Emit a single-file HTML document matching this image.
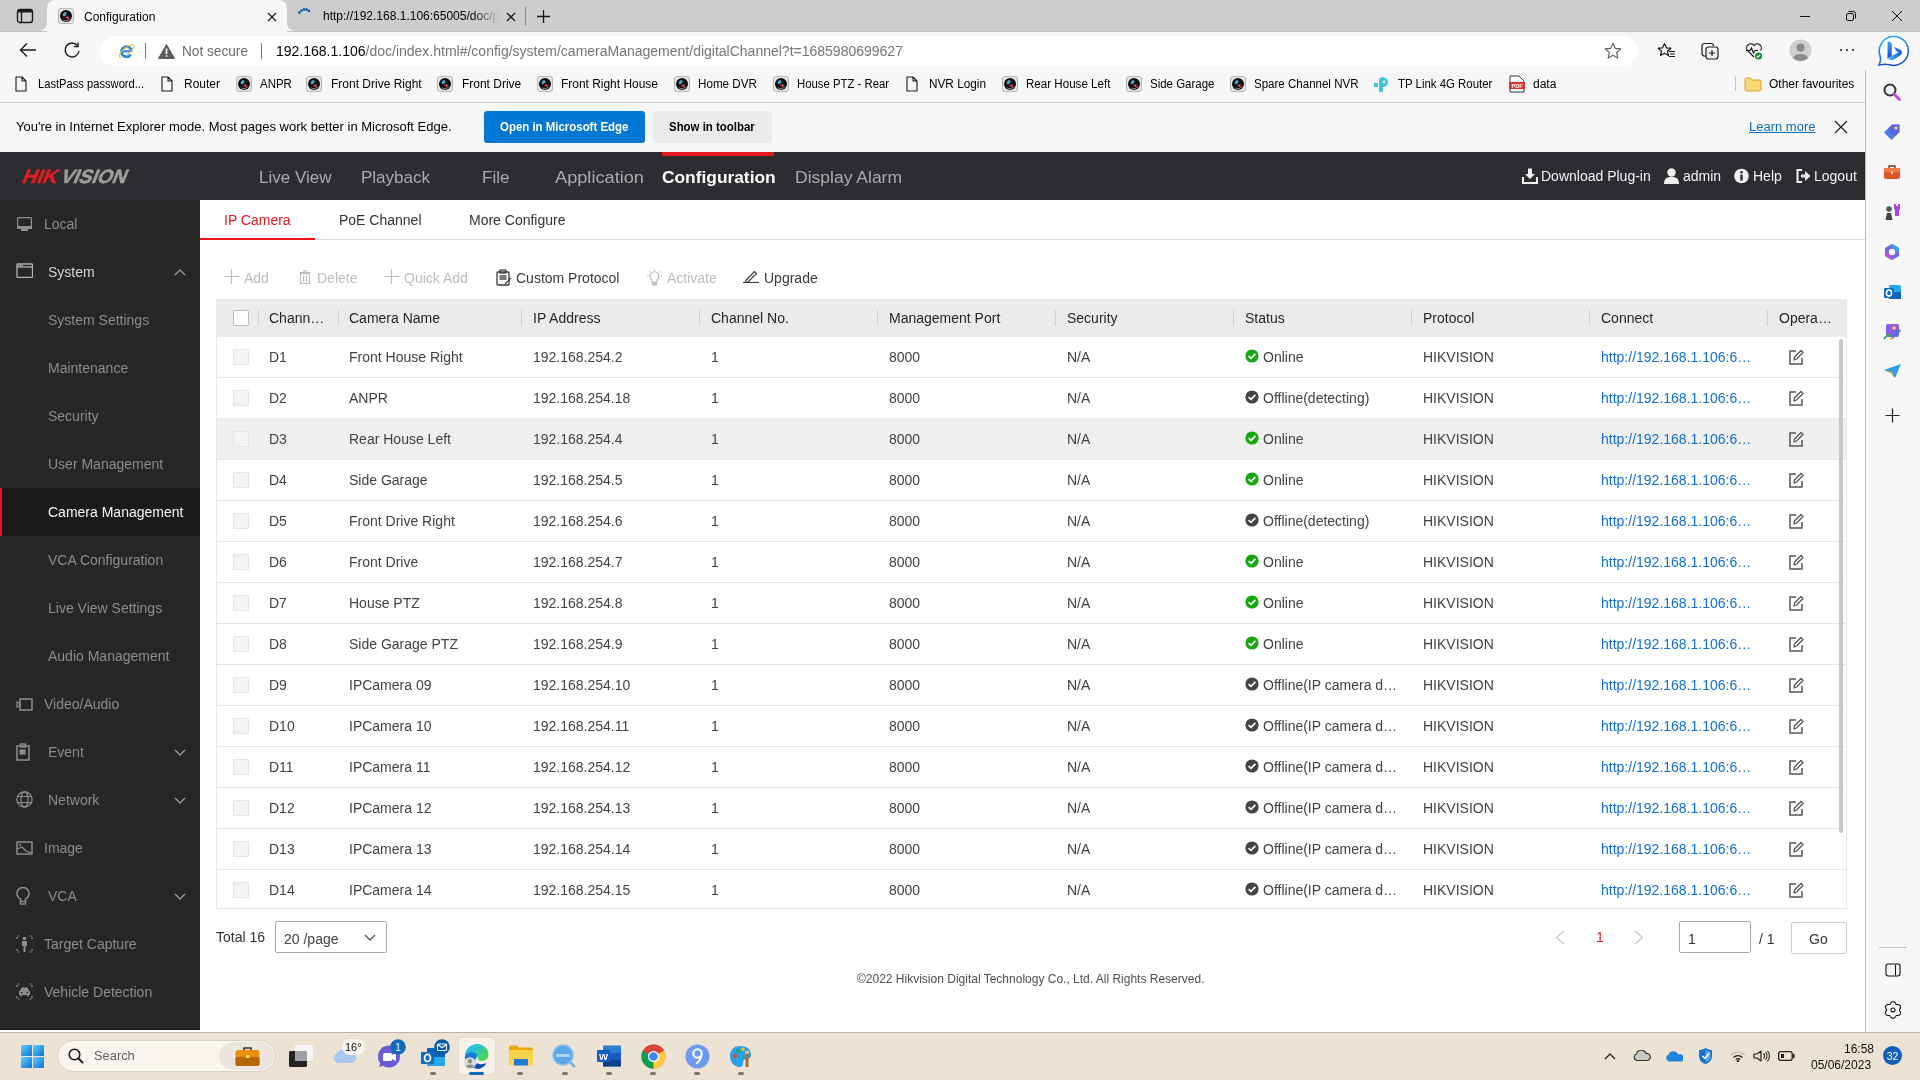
<!DOCTYPE html>
<html><head><meta charset="utf-8"><title>Configuration</title>
<style>
*{box-sizing:border-box;margin:0;padding:0}
html,body{width:1920px;height:1080px;overflow:hidden;background:#fff;font-family:"Liberation Sans",sans-serif;line-height:normal}
body{will-change:transform}
.a{position:absolute;white-space:nowrap}
</style></head><body>
<div class="a" style="left:0px;top:0px;width:1920px;height:31px;background:#cdcdcd"></div>
<div class="a" style="left:0px;top:31px;width:1920px;height:39px;background:#f7f7f7"></div>
<div class="a" style="left:0px;top:31px;width:47px;height:1px;background:#c2c2c2"></div>
<div class="a" style="left:287px;top:31px;width:1633px;height:1px;background:#c2c2c2"></div>
<div class="a" style="left:0px;top:70px;width:1865px;height:33px;background:#f7f7f7"></div>
<div class="a" style="left:0px;top:102px;width:1865px;height:1px;background:#d2d2d2"></div>
<div class="a" style="left:0px;top:103px;width:1865px;height:49px;background:#f7f7f7"></div>
<div class="a" style="left:1865px;top:70px;width:55px;height:962px;background:#f7f7f7"></div>
<div class="a" style="left:1865px;top:70px;width:1px;height:962px;background:#bdbdbd"></div>
<div class="a" style="left:0px;top:152px;width:1865px;height:48px;background:#2c2d31"></div>
<div class="a" style="left:0px;top:200px;width:200px;height:830px;background:#262626"></div>
<div class="a" style="left:0px;top:1029px;width:200px;height:1px;background:#151515"></div>
<div class="a" style="left:200px;top:200px;width:1665px;height:832px;background:#fff"></div>
<div class="a" style="left:0px;top:1032px;width:1920px;height:48px;background:#ece3d4"></div>
<div class="a" style="left:0px;top:1032px;width:1920px;height:1px;background:#bbb3a8"></div>
<svg class="a" style="left:16px;top:8px;" width="20" height="16" viewBox="0 0 20 16"><rect x="1.5" y="1.5" width="15" height="13" rx="2.5" fill="none" stroke="#1a1a1a" stroke-width="1.4"/><rect x="1.5" y="1.5" width="15" height="3" rx="1" fill="#1a1a1a"/><line x1="5.5" y1="2" x2="5.5" y2="14" stroke="#1a1a1a" stroke-width="1.4"/></svg>
<div class="a" style="left:47px;top:0;width:240px;height:31px;background:#f7f7f7;border-radius:8px 8px 0 0"></div>
<svg class="a" style="left:39px;top:23px" width="8" height="8"><path d="M8 0 V8 H0 A8 8 0 0 0 8 0Z" fill="#f7f7f7"/></svg>
<svg class="a" style="left:287px;top:23px" width="8" height="8"><path d="M0 0 V8 H8 A8 8 0 0 1 0 0Z" fill="#f7f7f7"/></svg>
<svg class="a" style="left:58px;top:8px;" width="16" height="16" viewBox="0 0 16 16"><rect x="0.5" y="0.5" width="15" height="15" rx="2.5" fill="#e6e6e6" stroke="#a8a8a8" stroke-width="0.8"/><circle cx="8" cy="8" r="6" fill="#0e0e0e"/><path d="M11.8 10.5 A4.6 4.6 0 0 1 5 11.8" fill="none" stroke="#cfcfcf" stroke-width="0.7"/><ellipse cx="6.6" cy="6.2" rx="1.6" ry="2.3" transform="rotate(40 6.6 6.2)" fill="#4aa8d8"/><ellipse cx="9.2" cy="9.6" rx="2.1" ry="1.7" fill="#8c1820"/><ellipse cx="9.4" cy="9.4" rx="0.9" ry="0.6" fill="#f08a8a"/></svg>
<div class="a" style="left:84px;top:10px;font-size:12px;color:#000;">Configuration</div>
<svg class="a" style="left:267px;top:12px;" width="10" height="10" viewBox="0 0 10 10"><path d="M1 1L9 9M9 1L1 9" stroke="#1a1a1a" stroke-width="1.3"/></svg>
<svg class="a" style="left:296px;top:6px;" width="16" height="10" viewBox="0 0 16 10"><circle cx="3.5" cy="6.6" r="1.35" fill="#0a5fb2"/><circle cx="5.5" cy="4.5" r="1.35" fill="#0a5fb2"/><circle cx="8.1" cy="3.4" r="1.35" fill="#0a5fb2"/><circle cx="10.6" cy="3.6" r="1.35" fill="#0a5fb2"/><circle cx="13.0" cy="4.9" r="1.35" fill="#0a5fb2"/></svg>
<div class="a" style="left:323px;top:9px;font-size:12px;color:#000;width:176px;overflow:hidden;-webkit-mask-image:linear-gradient(90deg,#000 85%,transparent)">http://192.168.1.106:65005/doc/page</div>
<svg class="a" style="left:506px;top:12px;" width="10" height="10" viewBox="0 0 10 10"><path d="M1 1L9 9M9 1L1 9" stroke="#1a1a1a" stroke-width="1.3"/></svg>
<div class="a" style="left:525px;top:7px;width:1px;height:19px;background:#8a8a8a"></div>
<svg class="a" style="left:536px;top:10px;" width="15" height="13" viewBox="0 0 15 13"><path d="M7.5 0V13M1 6.5H14" stroke="#1a1a1a" stroke-width="1.3"/></svg>
<div class="a" style="left:1800px;top:16px;width:10px;height:1px;background:#111"></div>
<svg class="a" style="left:1845px;top:10px;" width="12" height="12" viewBox="0 0 12 12"><rect x="1.5" y="3.5" width="7" height="7" rx="1.5" fill="none" stroke="#111" stroke-width="1"/><path d="M3.5 1.5 H8.5 A2 2 0 0 1 10.5 3.5 V8.5" fill="none" stroke="#111" stroke-width="1"/></svg>
<svg class="a" style="left:1891px;top:10px;" width="12" height="12" viewBox="0 0 12 12"><path d="M1 1L11 11M11 1L1 11" stroke="#111" stroke-width="1"/></svg>
<svg class="a" style="left:19px;top:42px;" width="18" height="16" viewBox="0 0 18 16"><path d="M17 8H2M8 1.5L1.5 8L8 14.5" fill="none" stroke="#1a1a1a" stroke-width="1.4"/></svg>
<svg class="a" style="left:63px;top:42px;" width="18" height="17" viewBox="0 0 18 17"><path d="M14.5 3.5 A7 7 0 1 0 16 9" fill="none" stroke="#1a1a1a" stroke-width="1.4"/><path d="M15 0.5V4.5H11" fill="none" stroke="#1a1a1a" stroke-width="1.4"/></svg>
<div class="a" style="left:100px;top:36px;width:1538px;height:30px;background:#fff;border-radius:15px"></div>
<svg class="a" style="left:117px;top:42px;" width="19" height="18" viewBox="0 0 19 18"><path d="M14.6 9.3 A5.1 5.1 0 1 0 13.7 12.6" fill="none" stroke="#2a8ce0" stroke-width="2.8"/><path d="M5 9.3 H14.8" stroke="#2a8ce0" stroke-width="2.2"/><ellipse cx="9.5" cy="9" rx="9" ry="3.2" fill="none" stroke="#f2b632" stroke-width="1.1" transform="rotate(-40 9.5 9)" stroke-dasharray="12 6 40"/></svg>
<div class="a" style="left:145px;top:43px;width:1px;height:16px;background:#777"></div>
<svg class="a" style="left:158px;top:44px;" width="17" height="15" viewBox="0 0 17 15"><path d="M8.5 0.5 L16.5 14.5 H0.5Z" fill="#5c5c5c" stroke="#5c5c5c" stroke-linejoin="round" stroke-width="1"/><rect x="7.7" y="4.5" width="1.6" height="5.5" fill="#fff"/><rect x="7.7" y="11.2" width="1.6" height="1.6" fill="#fff"/></svg>
<div class="a" style="left:182px;top:43px;font-size:14px;color:#6b6b6b;transform:scaleX(0.975);transform-origin:0 0;">Not secure</div>
<div class="a" style="left:261px;top:43px;width:1px;height:16px;background:#777"></div>
<div class="a" style="left:276px;top:43px;font-size:14px;color:#767676"><span style="color:#000">192.168.1.106</span>/doc/index.html#/config/system/cameraManagement/digitalChannel?t=1685980699627</div>
<svg class="a" style="left:1604px;top:42px;" width="18" height="18" viewBox="0 0 18 18"><path d="M9 1.2 L11.3 6.4 L16.8 6.9 L12.6 10.6 L13.9 16.1 L9 13.2 L4.1 16.1 L5.4 10.6 L1.2 6.9 L6.7 6.4Z" fill="none" stroke="#5a5a5a" stroke-width="1.1" stroke-linejoin="round"/></svg>
<svg class="a" style="left:1657px;top:42px;" width="19" height="18" viewBox="0 0 19 18"><path d="M7.5 1.5 L9.4 5.8 L13.8 6.2 L10.4 9.2 L11.5 13.6 L7.5 11.3 L3.5 13.6 L4.6 9.2 L1.2 6.2 L5.6 5.8Z" fill="none" stroke="#1a1a1a" stroke-width="1.2" stroke-linejoin="round"/><path d="M12 9.5H18M13 12H18M12 14.5H18" stroke="#1a1a1a" stroke-width="1.2"/></svg>
<svg class="a" style="left:1701px;top:42px;" width="19" height="18" viewBox="0 0 19 18"><path d="M5 14 H3.5 A2.5 2.5 0 0 1 1 11.5 V4 A2.5 2.5 0 0 1 3.5 1.5 H10 A2.5 2.5 0 0 1 12.5 4" fill="none" stroke="#1a1a1a" stroke-width="1.2"/><rect x="5" y="5" width="12" height="12" rx="2.5" fill="none" stroke="#1a1a1a" stroke-width="1.2"/><path d="M11 8V14M8 11H14" stroke="#1a1a1a" stroke-width="1.2"/></svg>
<svg class="a" style="left:1745px;top:42px;" width="19" height="19" viewBox="0 0 19 19"><path d="M9 15 L2.5 8.5 A4 4 0 0 1 9 3.5 A4 4 0 0 1 15.5 8.5" fill="none" stroke="#1a1a1a" stroke-width="1.2"/><path d="M1 8.5H5L6.5 6L8.5 11L10 8.5H13" fill="none" stroke="#1a1a1a" stroke-width="1.2"/><circle cx="13.5" cy="14" r="3.6" fill="#1e8a3a"/><path d="M11.8 14L13 15.2L15.2 12.8" fill="none" stroke="#fff" stroke-width="1.1"/></svg>
<svg class="a" style="left:1789px;top:39px;" width="23" height="23" viewBox="0 0 23 23"><circle cx="11.5" cy="11.5" r="11" fill="#cfcfcf"/><circle cx="11.5" cy="8.5" r="4" fill="#8a8a8a"/><path d="M4 19 A8 6 0 0 1 19 19 A11 11 0 0 1 4 19Z" fill="#8a8a8a"/></svg>
<div class="a" style="left:1840px;top:49px;width:2.4px;height:2.4px;background:#1a1a1a;border-radius:50%"></div>
<div class="a" style="left:1846px;top:49px;width:2.4px;height:2.4px;background:#1a1a1a;border-radius:50%"></div>
<div class="a" style="left:1852px;top:49px;width:2.4px;height:2.4px;background:#1a1a1a;border-radius:50%"></div>
<svg class="a" style="left:1877px;top:35px;" width="32" height="32" viewBox="0 0 32 32"><defs><linearGradient id="bb" x1="0" y1="0" x2="0.3" y2="1"><stop offset="0" stop-color="#18b4ee"/><stop offset="1" stop-color="#1a4fd8"/></linearGradient><linearGradient id="bs" x1="0" y1="0" x2="0" y2="1"><stop offset="0" stop-color="#37a6ff"/><stop offset="1" stop-color="#1840d8"/></linearGradient><linearGradient id="bw" x1="0" y1="0" x2="1" y2="0"><stop offset="0" stop-color="#50d0f8"/><stop offset="1" stop-color="#1a50e0"/></linearGradient></defs><path d="M2 30 C3.5 27 4 24 3 20.5 A14.5 14.5 0 1 1 12.5 29.8 C8.5 28.5 5 29.5 2 30 Z" fill="#fff" stroke="url(#bb)" stroke-width="1.5"/><path d="M10.5 8.5 C10.5 6.5 11.5 6 13 7 L14.8 8.3 V23 L10.5 24Z" fill="url(#bs)"/><path d="M17.5 12 L23 14.5 C25.2 15.8 25.6 18.6 23.8 20 L17.5 24.3 C15 26 12 25.2 10.5 23 L21.5 17.2 L18.8 16 Z" fill="url(#bw)"/></svg>
<svg class="a" style="left:15px;top:76px;" width="12" height="16" viewBox="0 0 12 16"><path d="M1 1 H7 L11 5 V15 H1Z M7 1 V5 H11" fill="none" stroke="#1a1a1a" stroke-width="1.1" stroke-linejoin="round"/></svg>
<div class="a" style="left:38px;top:77px;font-size:12px;color:#000;transform:scaleX(0.93);transform-origin:0 0;">LastPass password...</div>
<svg class="a" style="left:161px;top:76px;" width="12" height="16" viewBox="0 0 12 16"><path d="M1 1 H7 L11 5 V15 H1Z M7 1 V5 H11" fill="none" stroke="#1a1a1a" stroke-width="1.1" stroke-linejoin="round"/></svg>
<div class="a" style="left:184px;top:77px;font-size:12px;color:#000;transform:scaleX(0.997);transform-origin:0 0;">Router</div>
<svg class="a" style="left:236px;top:76px;" width="16" height="16" viewBox="0 0 16 16"><rect x="0.5" y="0.5" width="15" height="15" rx="2.5" fill="#e6e6e6" stroke="#a8a8a8" stroke-width="0.8"/><circle cx="8" cy="8" r="6" fill="#0e0e0e"/><path d="M11.8 10.5 A4.6 4.6 0 0 1 5 11.8" fill="none" stroke="#cfcfcf" stroke-width="0.7"/><ellipse cx="6.6" cy="6.2" rx="1.6" ry="2.3" transform="rotate(40 6.6 6.2)" fill="#4aa8d8"/><ellipse cx="9.2" cy="9.6" rx="2.1" ry="1.7" fill="#8c1820"/><ellipse cx="9.4" cy="9.4" rx="0.9" ry="0.6" fill="#f08a8a"/></svg>
<div class="a" style="left:260px;top:77px;font-size:12px;color:#000;transform:scaleX(0.956);transform-origin:0 0;">ANPR</div>
<svg class="a" style="left:306px;top:76px;" width="16" height="16" viewBox="0 0 16 16"><rect x="0.5" y="0.5" width="15" height="15" rx="2.5" fill="#e6e6e6" stroke="#a8a8a8" stroke-width="0.8"/><circle cx="8" cy="8" r="6" fill="#0e0e0e"/><path d="M11.8 10.5 A4.6 4.6 0 0 1 5 11.8" fill="none" stroke="#cfcfcf" stroke-width="0.7"/><ellipse cx="6.6" cy="6.2" rx="1.6" ry="2.3" transform="rotate(40 6.6 6.2)" fill="#4aa8d8"/><ellipse cx="9.2" cy="9.6" rx="2.1" ry="1.7" fill="#8c1820"/><ellipse cx="9.4" cy="9.4" rx="0.9" ry="0.6" fill="#f08a8a"/></svg>
<div class="a" style="left:331px;top:77px;font-size:12px;color:#000;transform:scaleX(1.0);transform-origin:0 0;">Front Drive Right</div>
<svg class="a" style="left:437px;top:76px;" width="16" height="16" viewBox="0 0 16 16"><rect x="0.5" y="0.5" width="15" height="15" rx="2.5" fill="#e6e6e6" stroke="#a8a8a8" stroke-width="0.8"/><circle cx="8" cy="8" r="6" fill="#0e0e0e"/><path d="M11.8 10.5 A4.6 4.6 0 0 1 5 11.8" fill="none" stroke="#cfcfcf" stroke-width="0.7"/><ellipse cx="6.6" cy="6.2" rx="1.6" ry="2.3" transform="rotate(40 6.6 6.2)" fill="#4aa8d8"/><ellipse cx="9.2" cy="9.6" rx="2.1" ry="1.7" fill="#8c1820"/><ellipse cx="9.4" cy="9.4" rx="0.9" ry="0.6" fill="#f08a8a"/></svg>
<div class="a" style="left:462px;top:77px;font-size:12px;color:#000;transform:scaleX(0.998);transform-origin:0 0;">Front Drive</div>
<svg class="a" style="left:537px;top:76px;" width="16" height="16" viewBox="0 0 16 16"><rect x="0.5" y="0.5" width="15" height="15" rx="2.5" fill="#e6e6e6" stroke="#a8a8a8" stroke-width="0.8"/><circle cx="8" cy="8" r="6" fill="#0e0e0e"/><path d="M11.8 10.5 A4.6 4.6 0 0 1 5 11.8" fill="none" stroke="#cfcfcf" stroke-width="0.7"/><ellipse cx="6.6" cy="6.2" rx="1.6" ry="2.3" transform="rotate(40 6.6 6.2)" fill="#4aa8d8"/><ellipse cx="9.2" cy="9.6" rx="2.1" ry="1.7" fill="#8c1820"/><ellipse cx="9.4" cy="9.4" rx="0.9" ry="0.6" fill="#f08a8a"/></svg>
<div class="a" style="left:561px;top:77px;font-size:12px;color:#000;transform:scaleX(0.995);transform-origin:0 0;">Front Right House</div>
<svg class="a" style="left:674px;top:76px;" width="16" height="16" viewBox="0 0 16 16"><rect x="0.5" y="0.5" width="15" height="15" rx="2.5" fill="#e6e6e6" stroke="#a8a8a8" stroke-width="0.8"/><circle cx="8" cy="8" r="6" fill="#0e0e0e"/><path d="M11.8 10.5 A4.6 4.6 0 0 1 5 11.8" fill="none" stroke="#cfcfcf" stroke-width="0.7"/><ellipse cx="6.6" cy="6.2" rx="1.6" ry="2.3" transform="rotate(40 6.6 6.2)" fill="#4aa8d8"/><ellipse cx="9.2" cy="9.6" rx="2.1" ry="1.7" fill="#8c1820"/><ellipse cx="9.4" cy="9.4" rx="0.9" ry="0.6" fill="#f08a8a"/></svg>
<div class="a" style="left:698px;top:77px;font-size:12px;color:#000;transform:scaleX(0.97);transform-origin:0 0;">Home DVR</div>
<svg class="a" style="left:773px;top:76px;" width="16" height="16" viewBox="0 0 16 16"><rect x="0.5" y="0.5" width="15" height="15" rx="2.5" fill="#e6e6e6" stroke="#a8a8a8" stroke-width="0.8"/><circle cx="8" cy="8" r="6" fill="#0e0e0e"/><path d="M11.8 10.5 A4.6 4.6 0 0 1 5 11.8" fill="none" stroke="#cfcfcf" stroke-width="0.7"/><ellipse cx="6.6" cy="6.2" rx="1.6" ry="2.3" transform="rotate(40 6.6 6.2)" fill="#4aa8d8"/><ellipse cx="9.2" cy="9.6" rx="2.1" ry="1.7" fill="#8c1820"/><ellipse cx="9.4" cy="9.4" rx="0.9" ry="0.6" fill="#f08a8a"/></svg>
<div class="a" style="left:797px;top:77px;font-size:12px;color:#000;transform:scaleX(0.946);transform-origin:0 0;">House PTZ - Rear</div>
<svg class="a" style="left:906px;top:76px;" width="12" height="16" viewBox="0 0 12 16"><path d="M1 1 H7 L11 5 V15 H1Z M7 1 V5 H11" fill="none" stroke="#1a1a1a" stroke-width="1.1" stroke-linejoin="round"/></svg>
<div class="a" style="left:929px;top:77px;font-size:12px;color:#000;transform:scaleX(0.981);transform-origin:0 0;">NVR Login</div>
<svg class="a" style="left:1002px;top:76px;" width="16" height="16" viewBox="0 0 16 16"><rect x="0.5" y="0.5" width="15" height="15" rx="2.5" fill="#e6e6e6" stroke="#a8a8a8" stroke-width="0.8"/><circle cx="8" cy="8" r="6" fill="#0e0e0e"/><path d="M11.8 10.5 A4.6 4.6 0 0 1 5 11.8" fill="none" stroke="#cfcfcf" stroke-width="0.7"/><ellipse cx="6.6" cy="6.2" rx="1.6" ry="2.3" transform="rotate(40 6.6 6.2)" fill="#4aa8d8"/><ellipse cx="9.2" cy="9.6" rx="2.1" ry="1.7" fill="#8c1820"/><ellipse cx="9.4" cy="9.4" rx="0.9" ry="0.6" fill="#f08a8a"/></svg>
<div class="a" style="left:1026px;top:77px;font-size:12px;color:#000;transform:scaleX(0.966);transform-origin:0 0;">Rear House Left</div>
<svg class="a" style="left:1126px;top:76px;" width="16" height="16" viewBox="0 0 16 16"><rect x="0.5" y="0.5" width="15" height="15" rx="2.5" fill="#e6e6e6" stroke="#a8a8a8" stroke-width="0.8"/><circle cx="8" cy="8" r="6" fill="#0e0e0e"/><path d="M11.8 10.5 A4.6 4.6 0 0 1 5 11.8" fill="none" stroke="#cfcfcf" stroke-width="0.7"/><ellipse cx="6.6" cy="6.2" rx="1.6" ry="2.3" transform="rotate(40 6.6 6.2)" fill="#4aa8d8"/><ellipse cx="9.2" cy="9.6" rx="2.1" ry="1.7" fill="#8c1820"/><ellipse cx="9.4" cy="9.4" rx="0.9" ry="0.6" fill="#f08a8a"/></svg>
<div class="a" style="left:1150px;top:77px;font-size:12px;color:#000;transform:scaleX(0.956);transform-origin:0 0;">Side Garage</div>
<svg class="a" style="left:1230px;top:76px;" width="16" height="16" viewBox="0 0 16 16"><rect x="0.5" y="0.5" width="15" height="15" rx="2.5" fill="#e6e6e6" stroke="#a8a8a8" stroke-width="0.8"/><circle cx="8" cy="8" r="6" fill="#0e0e0e"/><path d="M11.8 10.5 A4.6 4.6 0 0 1 5 11.8" fill="none" stroke="#cfcfcf" stroke-width="0.7"/><ellipse cx="6.6" cy="6.2" rx="1.6" ry="2.3" transform="rotate(40 6.6 6.2)" fill="#4aa8d8"/><ellipse cx="9.2" cy="9.6" rx="2.1" ry="1.7" fill="#8c1820"/><ellipse cx="9.4" cy="9.4" rx="0.9" ry="0.6" fill="#f08a8a"/></svg>
<div class="a" style="left:1254px;top:77px;font-size:12px;color:#000;transform:scaleX(0.961);transform-origin:0 0;">Spare Channel NVR</div>
<svg class="a" style="left:1373px;top:75px;" width="18" height="18" viewBox="0 0 18 18"><path d="M6 4 A5 5 0 1 1 11 12 H9 V8 H11 A1.2 1.2 0 1 0 9.8 6.8 V17 H6Z" fill="#3cc6d8"/><path d="M1 8 H5 V12 H1Z" fill="#3cc6d8"/></svg>
<div class="a" style="left:1398px;top:77px;font-size:12px;color:#000;transform:scaleX(0.952);transform-origin:0 0;">TP Link 4G Router</div>
<svg class="a" style="left:1509px;top:75px;" width="16" height="18" viewBox="0 0 16 18"><path d="M1 1 H10 L15 6 V17 H1Z" fill="#fff" stroke="#333" stroke-width="1"/><rect x="0" y="7" width="16" height="7" fill="#e03030"/><text x="8" y="12.6" font-size="5.5" font-family="Liberation Sans" font-weight="bold" fill="#fff" text-anchor="middle">PDF</text></svg>
<div class="a" style="left:1533px;top:77px;font-size:12px;color:#000;transform:scaleX(1.0);transform-origin:0 0;">data</div>
<div class="a" style="left:1735px;top:76px;width:1px;height:15px;background:#c8c8c8"></div>
<svg class="a" style="left:1744px;top:77px;" width="18" height="15" viewBox="0 0 18 15"><path d="M1 2.5 A1.5 1.5 0 0 1 2.5 1 H6.5 L8.5 3 H15.5 A1.5 1.5 0 0 1 17 4.5 V12.5 A1.5 1.5 0 0 1 15.5 14 H2.5 A1.5 1.5 0 0 1 1 12.5Z" fill="#f8d775" stroke="#c9a227" stroke-width="0.9"/></svg>
<div class="a" style="left:1769px;top:77px;font-size:12px;color:#000;">Other favourites</div>
<div class="a" style="left:16px;top:119px;font-size:13px;color:#000;">You're in Internet Explorer mode. Most pages work better in Microsoft Edge.</div>
<div class="a" style="left:484px;top:111px;width:161px;height:32px;background:#0078d4;border-radius:3px"></div>
<div class="a" style="left:500px;top:119px;font-size:13px;color:#fff;transform:scaleX(0.88);transform-origin:0 0;font-weight:bold;">Open in Microsoft Edge</div>
<div class="a" style="left:653px;top:111px;width:119px;height:32px;background:#ebebeb;border-radius:3px"></div>
<div class="a" style="left:669px;top:119px;font-size:13px;color:#000;transform:scaleX(0.88);transform-origin:0 0;font-weight:bold;">Show in toolbar</div>
<div class="a" style="left:1749px;top:119px;font-size:13px;color:#0f6cbd;text-decoration:underline">Learn more</div>
<svg class="a" style="left:1834px;top:120px;" width="14" height="14" viewBox="0 0 14 14"><path d="M1 1L13 13M13 1L1 13" stroke="#1a1a1a" stroke-width="1.2"/></svg>
<svg class="a" style="left:15px;top:160px;" width="125" height="30" viewBox="0 0 125 30"><g transform="translate(0,23) skewX(-22)"><text x="6" y="0" font-family="Liberation Sans" font-weight="bold" font-size="19.2" fill="#e31b23" stroke="#e31b23" stroke-width="0.5" textLength="35" lengthAdjust="spacingAndGlyphs">HIK</text><text x="44.5" y="0" font-family="Liberation Sans" font-weight="bold" font-size="19.2" fill="#9e9e9e" stroke="#9e9e9e" stroke-width="0.5" textLength="65.5" lengthAdjust="spacingAndGlyphs">VISION</text></g></svg>
<div class="a" style="left:662px;top:152px;width:112px;height:4px;background:#e8161f"></div>
<div class="a" style="left:259px;top:168px;font-size:17px;color:#aaabae;transform:scaleX(1.0);transform-origin:0 0;">Live View</div>
<div class="a" style="left:361px;top:168px;font-size:17px;color:#aaabae;transform:scaleX(1.0);transform-origin:0 0;">Playback</div>
<div class="a" style="left:482px;top:168px;font-size:17px;color:#aaabae;transform:scaleX(1.0);transform-origin:0 0;">File</div>
<div class="a" style="left:555px;top:168px;font-size:17px;color:#aaabae;transform:scaleX(1.07);transform-origin:0 0;">Application</div>
<div class="a" style="left:795px;top:168px;font-size:17px;color:#aaabae;transform:scaleX(1.03);transform-origin:0 0;">Display Alarm</div>
<div class="a" style="left:662px;top:168px;font-size:17px;color:#ffffff;transform:scaleX(1.02);transform-origin:0 0;font-weight:bold;">Configuration</div>
<svg class="a" style="left:1522px;top:168px;" width="16" height="16" viewBox="0 0 16 16"><path d="M6 0.5 H10 V6 H13 L8 11 L3 6 H6Z" fill="#f0f0f0"/><path d="M1 9 V15 H15 V9" fill="none" stroke="#f0f0f0" stroke-width="2"/></svg>
<div class="a" style="left:1541px;top:168px;font-size:14px;color:#f2f2f2;">Download Plug-in</div>
<svg class="a" style="left:1664px;top:168px;" width="15" height="16" viewBox="0 0 15 16"><circle cx="7.5" cy="4.5" r="4.2" fill="#f0f0f0"/><path d="M0 16 C0 10 3 9 7.5 9 C12 9 15 10 15 16Z" fill="#f0f0f0"/></svg>
<div class="a" style="left:1683px;top:168px;font-size:14px;color:#f2f2f2;">admin</div>
<svg class="a" style="left:1734px;top:168px;" width="15" height="16" viewBox="0 0 15 16"><circle cx="7.5" cy="8" r="7.3" fill="#f0f0f0"/><circle cx="7.5" cy="4.3" r="1.3" fill="#2c2d31"/><rect x="6.3" y="6.5" width="2.4" height="6" fill="#2c2d31"/></svg>
<div class="a" style="left:1753px;top:168px;font-size:14px;color:#f2f2f2;">Help</div>
<svg class="a" style="left:1796px;top:168px;" width="15" height="16" viewBox="0 0 15 16"><path d="M6 2 H1.5 V14 H6" fill="none" stroke="#f0f0f0" stroke-width="2"/><path d="M5 6.5 H9 V3 L14.5 8 L9 13 V9.5 H5Z" fill="#f0f0f0"/></svg>
<div class="a" style="left:1814px;top:168px;font-size:14px;color:#f2f2f2;">Logout</div>
<div class="a" style="left:0px;top:488px;width:200px;height:48px;background:#1a1a1a"></div>
<div class="a" style="left:0px;top:488px;width:2px;height:48px;background:#e8161f"></div>
<svg class="a" style="left:16px;top:216px;" width="17" height="17" viewBox="0 0 17 17"><rect x="1.6" y="1.6" width="13.8" height="10.8" rx="0.8" fill="none" stroke="#8f8f8f" stroke-width="1.2"/><rect x="1" y="10" width="15" height="3" fill="#8f8f8f"/><rect x="5" y="13" width="7" height="2" fill="#8f8f8f"/></svg>
<div class="a" style="left:44px;top:216px;font-size:14px;color:#8c8c8c;">Local</div>
<svg class="a" style="left:16px;top:263px;" width="17" height="15" viewBox="0 0 17 15"><rect x="1" y="1" width="15.5" height="13.5" rx="0.8" fill="none" stroke="#b4b4b4" stroke-width="1.3"/><rect x="1" y="3.3" width="15.5" height="1.3" fill="#b4b4b4"/><rect x="2.3" y="2" width="1" height="1.5" fill="#b4b4b4"/><rect x="4" y="2" width="1" height="1.5" fill="#b4b4b4"/><rect x="5.7" y="2" width="1" height="1.5" fill="#b4b4b4"/></svg>
<div class="a" style="left:48px;top:264px;font-size:14px;color:#d2d2d2;">System</div>
<svg class="a" style="left:174px;top:269px;" width="12" height="7" viewBox="0 0 12 7"><path d="M1 6 L6 1 L11 6" fill="none" stroke="#9a9a9a" stroke-width="1.3"/></svg>
<div class="a" style="left:48px;top:312px;font-size:14px;color:#8c8c8c;">System Settings</div>
<div class="a" style="left:48px;top:360px;font-size:14px;color:#8c8c8c;">Maintenance</div>
<div class="a" style="left:48px;top:408px;font-size:14px;color:#8c8c8c;">Security</div>
<div class="a" style="left:48px;top:456px;font-size:14px;color:#8c8c8c;">User Management</div>
<div class="a" style="left:48px;top:504px;font-size:14px;color:#f5f5f5;">Camera Management</div>
<div class="a" style="left:48px;top:552px;font-size:14px;color:#8c8c8c;">VCA Configuration</div>
<div class="a" style="left:48px;top:600px;font-size:14px;color:#8c8c8c;">Live View Settings</div>
<div class="a" style="left:48px;top:648px;font-size:14px;color:#8c8c8c;">Audio Management</div>
<svg class="a" style="left:16px;top:698px;" width="17" height="13" viewBox="0 0 17 13"><rect x="4" y="1" width="12" height="11" fill="none" stroke="#8f8f8f" stroke-width="1.5"/><path d="M1 4 L4 5.5 V7.5 L1 9Z" fill="none" stroke="#8f8f8f" stroke-width="1.2"/></svg>
<div class="a" style="left:44px;top:696px;font-size:14px;color:#8c8c8c;">Video/Audio</div>
<svg class="a" style="left:16px;top:743px;" width="14" height="18" viewBox="0 0 14 18"><rect x="1" y="3" width="12" height="14" fill="none" stroke="#8f8f8f" stroke-width="1.5"/><rect x="4.5" y="1" width="5" height="3" fill="none" stroke="#8f8f8f" stroke-width="1.3"/><rect x="3.5" y="6.5" width="6" height="5" fill="#8f8f8f"/></svg>
<div class="a" style="left:48px;top:744px;font-size:14px;color:#8c8c8c;">Event</div>
<svg class="a" style="left:174px;top:749px;" width="12" height="7" viewBox="0 0 12 7"><path d="M1 1 L6 6 L11 1" fill="none" stroke="#9a9a9a" stroke-width="1.3"/></svg>
<svg class="a" style="left:16px;top:791px;" width="17" height="17" viewBox="0 0 17 17"><circle cx="8.5" cy="8.5" r="7.6" fill="none" stroke="#8f8f8f" stroke-width="1.3"/><ellipse cx="8.5" cy="8.5" rx="3.6" ry="7.6" fill="none" stroke="#8f8f8f" stroke-width="1.2"/><path d="M1.2 5.5 H15.8 M1.2 11.5 H15.8" stroke="#8f8f8f" stroke-width="1.2"/></svg>
<div class="a" style="left:48px;top:792px;font-size:14px;color:#8c8c8c;">Network</div>
<svg class="a" style="left:174px;top:797px;" width="12" height="7" viewBox="0 0 12 7"><path d="M1 1 L6 6 L11 1" fill="none" stroke="#9a9a9a" stroke-width="1.3"/></svg>
<svg class="a" style="left:16px;top:841px;" width="17" height="14" viewBox="0 0 17 14"><rect x="1" y="1" width="15" height="12" fill="none" stroke="#8f8f8f" stroke-width="1.5"/><path d="M1.5 8 L6 6 L10 10 L15.5 12" fill="none" stroke="#8f8f8f" stroke-width="1.3"/><circle cx="4" cy="4" r="1" fill="#8f8f8f"/></svg>
<div class="a" style="left:44px;top:840px;font-size:14px;color:#8c8c8c;">Image</div>
<svg class="a" style="left:16px;top:887px;" width="14" height="18" viewBox="0 0 14 18"><path d="M4.5 15 V12 A6 6 0 1 1 9.5 12 V15" fill="none" stroke="#8f8f8f" stroke-width="1.5"/><rect x="4.5" y="14.5" width="5" height="2.5" fill="none" stroke="#8f8f8f" stroke-width="1.3"/></svg>
<div class="a" style="left:48px;top:888px;font-size:14px;color:#8c8c8c;">VCA</div>
<svg class="a" style="left:174px;top:893px;" width="12" height="7" viewBox="0 0 12 7"><path d="M1 1 L6 6 L11 1" fill="none" stroke="#9a9a9a" stroke-width="1.3"/></svg>
<svg class="a" style="left:16px;top:935px;" width="17" height="18" viewBox="0 0 17 18"><path d="M1 4 V1 H3.5 M13.5 1 H16 V4 M16 14 V17 H13.5 M3.5 17 H1 V14" fill="none" stroke="#8f8f8f" stroke-width="1.2" stroke-dasharray="2 1.5"/><circle cx="8.5" cy="3.5" r="1.8" fill="#8f8f8f"/><path d="M6 6 H11 V11 H9.5 V17 H7.5 V11 H6Z" fill="#8f8f8f"/></svg>
<div class="a" style="left:44px;top:936px;font-size:14px;color:#8c8c8c;">Target Capture</div>
<svg class="a" style="left:16px;top:983px;" width="17" height="17" viewBox="0 0 17 17"><path d="M1 4 V1 H3.5 M13.5 1 H16 V4 M16 13 V16 H13.5 M3.5 16 H1 V13" fill="none" stroke="#8f8f8f" stroke-width="1.2" stroke-dasharray="2 1.5"/><path d="M4 8 L5.5 4.5 H11.5 L13 8 H14 V12 H12.5 V13.5 H11 V12 H6 V13.5 H4.5 V12 H3 V8Z" fill="#8f8f8f"/><rect x="5" y="9" width="1.5" height="1.5" fill="#262626"/><rect x="10.5" y="9" width="1.5" height="1.5" fill="#262626"/></svg>
<div class="a" style="left:44px;top:984px;font-size:14px;color:#8c8c8c;">Vehicle Detection</div>
<div class="a" style="left:200px;top:239px;width:1665px;height:1px;background:#dcdcdc"></div>
<div class="a" style="left:200px;top:238px;width:115px;height:2px;background:#f0141e"></div>
<div class="a" style="left:224px;top:212px;font-size:14px;color:#e8161f;">IP Camera</div>
<div class="a" style="left:339px;top:212px;font-size:14px;color:#333;">PoE Channel</div>
<div class="a" style="left:469px;top:212px;font-size:14px;color:#333;">More Configure</div>
<svg class="a" style="left:224px;top:269px;" width="15" height="15" viewBox="0 0 15 15"><path d="M7.5 0V15M0 7.5H15" stroke="#bdbdbd" stroke-width="1.2"/></svg>
<div class="a" style="left:244px;top:270px;font-size:14px;color:#bdbdbd;">Add</div>
<svg class="a" style="left:299px;top:270px;" width="12" height="14" viewBox="0 0 12 14"><path d="M0.5 2.5H11.5M4 0.8H8" stroke="#bdbdbd" stroke-width="1.2"/><rect x="1.5" y="3.5" width="9" height="10" fill="none" stroke="#bdbdbd" stroke-width="1.2"/><path d="M4.5 5.5V11.5M7.5 5.5V11.5" stroke="#bdbdbd" stroke-width="1.2"/></svg>
<div class="a" style="left:317px;top:270px;font-size:14px;color:#bdbdbd;">Delete</div>
<svg class="a" style="left:384px;top:269px;" width="15" height="15" viewBox="0 0 15 15"><path d="M7.5 0V15M0 7.5H15" stroke="#bdbdbd" stroke-width="1.2"/></svg>
<div class="a" style="left:404px;top:270px;font-size:14px;color:#bdbdbd;">Quick Add</div>
<svg class="a" style="left:496px;top:269px;" width="16" height="17" viewBox="0 0 16 17"><rect x="1" y="3" width="12" height="13" rx="1" fill="none" stroke="#3a3a3a" stroke-width="1.3"/><rect x="4" y="1" width="6" height="3" fill="none" stroke="#3a3a3a" stroke-width="1.2"/><rect x="3.5" y="6" width="7" height="5" fill="#777"/><path d="M9 15 L15 9" stroke="#3a3a3a" stroke-width="1.2"/></svg>
<div class="a" style="left:516px;top:270px;font-size:14px;color:#3a3a3a;">Custom Protocol</div>
<svg class="a" style="left:646px;top:269px;" width="17" height="17" viewBox="0 0 17 17"><path d="M6 13 V11 A4.5 4.5 0 1 1 11 11 V13Z" fill="none" stroke="#bdbdbd" stroke-width="1.2"/><rect x="6" y="13.5" width="5" height="3" fill="#bdbdbd"/><path d="M8.5 0.5V2M1 6.5H2.5M14.5 6.5H16M3 2L4 3M14 2L13 3" stroke="#bdbdbd" stroke-width="1"/></svg>
<div class="a" style="left:667px;top:270px;font-size:14px;color:#bdbdbd;">Activate</div>
<svg class="a" style="left:743px;top:270px;" width="16" height="13" viewBox="0 0 16 13"><path d="M3 10 L11.5 1.5 L13.5 3.5 L5 12 L2.5 12.5Z" fill="none" stroke="#3a3a3a" stroke-width="1.2"/><path d="M0 12.5H16" stroke="#3a3a3a" stroke-width="1.2"/></svg>
<div class="a" style="left:764px;top:270px;font-size:14px;color:#3a3a3a;">Upgrade</div>
<div class="a" style="left:216px;top:299px;width:1631px;height:38px;background:#ebebeb"></div>
<div class="a" style="left:233px;top:310px;width:16px;height:16px;background:#fff;border:1px solid #bdbdbd;border-radius:2px"></div>
<div class="a" style="left:258px;top:310px;width:1px;height:16px;background:#d0d0d0"></div>
<div class="a" style="left:269px;top:310px;font-size:14px;color:#262626;">Chann&#8230;</div>
<div class="a" style="left:338px;top:310px;width:1px;height:16px;background:#d0d0d0"></div>
<div class="a" style="left:349px;top:310px;font-size:14px;color:#262626;">Camera Name</div>
<div class="a" style="left:521px;top:310px;width:1px;height:16px;background:#d0d0d0"></div>
<div class="a" style="left:533px;top:310px;font-size:14px;color:#262626;">IP Address</div>
<div class="a" style="left:699px;top:310px;width:1px;height:16px;background:#d0d0d0"></div>
<div class="a" style="left:711px;top:310px;font-size:14px;color:#262626;">Channel No.</div>
<div class="a" style="left:877px;top:310px;width:1px;height:16px;background:#d0d0d0"></div>
<div class="a" style="left:889px;top:310px;font-size:14px;color:#262626;">Management Port</div>
<div class="a" style="left:1055px;top:310px;width:1px;height:16px;background:#d0d0d0"></div>
<div class="a" style="left:1067px;top:310px;font-size:14px;color:#262626;">Security</div>
<div class="a" style="left:1233px;top:310px;width:1px;height:16px;background:#d0d0d0"></div>
<div class="a" style="left:1245px;top:310px;font-size:14px;color:#262626;">Status</div>
<div class="a" style="left:1411px;top:310px;width:1px;height:16px;background:#d0d0d0"></div>
<div class="a" style="left:1423px;top:310px;font-size:14px;color:#262626;">Protocol</div>
<div class="a" style="left:1589px;top:310px;width:1px;height:16px;background:#d0d0d0"></div>
<div class="a" style="left:1601px;top:310px;font-size:14px;color:#262626;">Connect</div>
<div class="a" style="left:1767px;top:310px;width:1px;height:16px;background:#d0d0d0"></div>
<div class="a" style="left:1779px;top:310px;font-size:14px;color:#262626;">Opera&#8230;</div>
<div class="a" style="left:216px;top:337px;width:1px;height:572px;background:#e8e8e8"></div>
<div class="a" style="left:1846px;top:337px;width:1px;height:572px;background:#e8e8e8"></div>
<div class="a" style="left:216px;top:908px;width:1631px;height:1px;background:#e8e8e8"></div>
<div class="a" style="left:217px;top:377px;width:1629px;height:1px;background:#e8e8e8"></div>
<div class="a" style="left:233px;top:349px;width:16px;height:16px;background:#f4f4f4;border:1px solid #e6e6e6;border-radius:1px"></div>
<div class="a" style="left:269px;top:349px;font-size:14px;color:#424242;">D1</div>
<div class="a" style="left:349px;top:349px;font-size:14px;color:#424242;">Front House Right</div>
<div class="a" style="left:533px;top:349px;font-size:14px;color:#424242;">192.168.254.2</div>
<div class="a" style="left:711px;top:349px;font-size:14px;color:#424242;">1</div>
<div class="a" style="left:889px;top:349px;font-size:14px;color:#424242;">8000</div>
<div class="a" style="left:1067px;top:349px;font-size:14px;color:#424242;">N/A</div>
<svg class="a" style="left:1245px;top:349px;" width="14" height="14" viewBox="0 0 14 14"><circle cx="7" cy="7" r="6.6" fill="#16a80f"/><path d="M3.6 7.2 L6 9.4 L10.4 4.8" fill="none" stroke="#fff" stroke-width="1.7"/></svg>
<div class="a" style="left:1263px;top:349px;font-size:14px;color:#424242;">Online</div>
<div class="a" style="left:1423px;top:349px;font-size:14px;color:#424242;">HIKVISION</div>
<div class="a" style="left:1601px;top:349px;font-size:14px;color:#106ed2;">http://192.168.1.106:6&#8230;</div>
<svg class="a" style="left:1788px;top:349px;" width="16" height="16" viewBox="0 0 16 16"><path d="M8 2 H2 V15 H14 V9" fill="none" stroke="#555" stroke-width="1.5"/><path d="M6 11 L6.5 8 L13 1.5 L15 3.5 L8.5 10Z" fill="none" stroke="#555" stroke-width="1.3" stroke-linejoin="round"/></svg>
<div class="a" style="left:217px;top:418px;width:1629px;height:1px;background:#e8e8e8"></div>
<div class="a" style="left:233px;top:390px;width:16px;height:16px;background:#f4f4f4;border:1px solid #e6e6e6;border-radius:1px"></div>
<div class="a" style="left:269px;top:390px;font-size:14px;color:#424242;">D2</div>
<div class="a" style="left:349px;top:390px;font-size:14px;color:#424242;">ANPR</div>
<div class="a" style="left:533px;top:390px;font-size:14px;color:#424242;">192.168.254.18</div>
<div class="a" style="left:711px;top:390px;font-size:14px;color:#424242;">1</div>
<div class="a" style="left:889px;top:390px;font-size:14px;color:#424242;">8000</div>
<div class="a" style="left:1067px;top:390px;font-size:14px;color:#424242;">N/A</div>
<svg class="a" style="left:1245px;top:390px;" width="14" height="14" viewBox="0 0 14 14"><circle cx="7" cy="7" r="6.6" fill="#444"/><path d="M3.6 7.2 L6 9.4 L10.4 4.8" fill="none" stroke="#fff" stroke-width="1.7"/></svg>
<div class="a" style="left:1263px;top:390px;font-size:14px;color:#424242;">Offline(detecting)</div>
<div class="a" style="left:1423px;top:390px;font-size:14px;color:#424242;">HIKVISION</div>
<div class="a" style="left:1601px;top:390px;font-size:14px;color:#106ed2;">http://192.168.1.106:6&#8230;</div>
<svg class="a" style="left:1788px;top:390px;" width="16" height="16" viewBox="0 0 16 16"><path d="M8 2 H2 V15 H14 V9" fill="none" stroke="#555" stroke-width="1.5"/><path d="M6 11 L6.5 8 L13 1.5 L15 3.5 L8.5 10Z" fill="none" stroke="#555" stroke-width="1.3" stroke-linejoin="round"/></svg>
<div class="a" style="left:217px;top:419px;width:1629px;height:40px;background:#f0f0f0"></div>
<div class="a" style="left:217px;top:459px;width:1629px;height:1px;background:#e8e8e8"></div>
<div class="a" style="left:233px;top:431px;width:16px;height:16px;background:#f4f4f4;border:1px solid #e6e6e6;border-radius:1px"></div>
<div class="a" style="left:269px;top:431px;font-size:14px;color:#424242;">D3</div>
<div class="a" style="left:349px;top:431px;font-size:14px;color:#424242;">Rear House Left</div>
<div class="a" style="left:533px;top:431px;font-size:14px;color:#424242;">192.168.254.4</div>
<div class="a" style="left:711px;top:431px;font-size:14px;color:#424242;">1</div>
<div class="a" style="left:889px;top:431px;font-size:14px;color:#424242;">8000</div>
<div class="a" style="left:1067px;top:431px;font-size:14px;color:#424242;">N/A</div>
<svg class="a" style="left:1245px;top:431px;" width="14" height="14" viewBox="0 0 14 14"><circle cx="7" cy="7" r="6.6" fill="#16a80f"/><path d="M3.6 7.2 L6 9.4 L10.4 4.8" fill="none" stroke="#fff" stroke-width="1.7"/></svg>
<div class="a" style="left:1263px;top:431px;font-size:14px;color:#424242;">Online</div>
<div class="a" style="left:1423px;top:431px;font-size:14px;color:#424242;">HIKVISION</div>
<div class="a" style="left:1601px;top:431px;font-size:14px;color:#106ed2;">http://192.168.1.106:6&#8230;</div>
<svg class="a" style="left:1788px;top:431px;" width="16" height="16" viewBox="0 0 16 16"><path d="M8 2 H2 V15 H14 V9" fill="none" stroke="#555" stroke-width="1.5"/><path d="M6 11 L6.5 8 L13 1.5 L15 3.5 L8.5 10Z" fill="none" stroke="#555" stroke-width="1.3" stroke-linejoin="round"/></svg>
<div class="a" style="left:217px;top:500px;width:1629px;height:1px;background:#e8e8e8"></div>
<div class="a" style="left:233px;top:472px;width:16px;height:16px;background:#f4f4f4;border:1px solid #e6e6e6;border-radius:1px"></div>
<div class="a" style="left:269px;top:472px;font-size:14px;color:#424242;">D4</div>
<div class="a" style="left:349px;top:472px;font-size:14px;color:#424242;">Side Garage</div>
<div class="a" style="left:533px;top:472px;font-size:14px;color:#424242;">192.168.254.5</div>
<div class="a" style="left:711px;top:472px;font-size:14px;color:#424242;">1</div>
<div class="a" style="left:889px;top:472px;font-size:14px;color:#424242;">8000</div>
<div class="a" style="left:1067px;top:472px;font-size:14px;color:#424242;">N/A</div>
<svg class="a" style="left:1245px;top:472px;" width="14" height="14" viewBox="0 0 14 14"><circle cx="7" cy="7" r="6.6" fill="#16a80f"/><path d="M3.6 7.2 L6 9.4 L10.4 4.8" fill="none" stroke="#fff" stroke-width="1.7"/></svg>
<div class="a" style="left:1263px;top:472px;font-size:14px;color:#424242;">Online</div>
<div class="a" style="left:1423px;top:472px;font-size:14px;color:#424242;">HIKVISION</div>
<div class="a" style="left:1601px;top:472px;font-size:14px;color:#106ed2;">http://192.168.1.106:6&#8230;</div>
<svg class="a" style="left:1788px;top:472px;" width="16" height="16" viewBox="0 0 16 16"><path d="M8 2 H2 V15 H14 V9" fill="none" stroke="#555" stroke-width="1.5"/><path d="M6 11 L6.5 8 L13 1.5 L15 3.5 L8.5 10Z" fill="none" stroke="#555" stroke-width="1.3" stroke-linejoin="round"/></svg>
<div class="a" style="left:217px;top:541px;width:1629px;height:1px;background:#e8e8e8"></div>
<div class="a" style="left:233px;top:513px;width:16px;height:16px;background:#f4f4f4;border:1px solid #e6e6e6;border-radius:1px"></div>
<div class="a" style="left:269px;top:513px;font-size:14px;color:#424242;">D5</div>
<div class="a" style="left:349px;top:513px;font-size:14px;color:#424242;">Front Drive Right</div>
<div class="a" style="left:533px;top:513px;font-size:14px;color:#424242;">192.168.254.6</div>
<div class="a" style="left:711px;top:513px;font-size:14px;color:#424242;">1</div>
<div class="a" style="left:889px;top:513px;font-size:14px;color:#424242;">8000</div>
<div class="a" style="left:1067px;top:513px;font-size:14px;color:#424242;">N/A</div>
<svg class="a" style="left:1245px;top:513px;" width="14" height="14" viewBox="0 0 14 14"><circle cx="7" cy="7" r="6.6" fill="#444"/><path d="M3.6 7.2 L6 9.4 L10.4 4.8" fill="none" stroke="#fff" stroke-width="1.7"/></svg>
<div class="a" style="left:1263px;top:513px;font-size:14px;color:#424242;">Offline(detecting)</div>
<div class="a" style="left:1423px;top:513px;font-size:14px;color:#424242;">HIKVISION</div>
<div class="a" style="left:1601px;top:513px;font-size:14px;color:#106ed2;">http://192.168.1.106:6&#8230;</div>
<svg class="a" style="left:1788px;top:513px;" width="16" height="16" viewBox="0 0 16 16"><path d="M8 2 H2 V15 H14 V9" fill="none" stroke="#555" stroke-width="1.5"/><path d="M6 11 L6.5 8 L13 1.5 L15 3.5 L8.5 10Z" fill="none" stroke="#555" stroke-width="1.3" stroke-linejoin="round"/></svg>
<div class="a" style="left:217px;top:582px;width:1629px;height:1px;background:#e8e8e8"></div>
<div class="a" style="left:233px;top:554px;width:16px;height:16px;background:#f4f4f4;border:1px solid #e6e6e6;border-radius:1px"></div>
<div class="a" style="left:269px;top:554px;font-size:14px;color:#424242;">D6</div>
<div class="a" style="left:349px;top:554px;font-size:14px;color:#424242;">Front Drive</div>
<div class="a" style="left:533px;top:554px;font-size:14px;color:#424242;">192.168.254.7</div>
<div class="a" style="left:711px;top:554px;font-size:14px;color:#424242;">1</div>
<div class="a" style="left:889px;top:554px;font-size:14px;color:#424242;">8000</div>
<div class="a" style="left:1067px;top:554px;font-size:14px;color:#424242;">N/A</div>
<svg class="a" style="left:1245px;top:554px;" width="14" height="14" viewBox="0 0 14 14"><circle cx="7" cy="7" r="6.6" fill="#16a80f"/><path d="M3.6 7.2 L6 9.4 L10.4 4.8" fill="none" stroke="#fff" stroke-width="1.7"/></svg>
<div class="a" style="left:1263px;top:554px;font-size:14px;color:#424242;">Online</div>
<div class="a" style="left:1423px;top:554px;font-size:14px;color:#424242;">HIKVISION</div>
<div class="a" style="left:1601px;top:554px;font-size:14px;color:#106ed2;">http://192.168.1.106:6&#8230;</div>
<svg class="a" style="left:1788px;top:554px;" width="16" height="16" viewBox="0 0 16 16"><path d="M8 2 H2 V15 H14 V9" fill="none" stroke="#555" stroke-width="1.5"/><path d="M6 11 L6.5 8 L13 1.5 L15 3.5 L8.5 10Z" fill="none" stroke="#555" stroke-width="1.3" stroke-linejoin="round"/></svg>
<div class="a" style="left:217px;top:623px;width:1629px;height:1px;background:#e8e8e8"></div>
<div class="a" style="left:233px;top:595px;width:16px;height:16px;background:#f4f4f4;border:1px solid #e6e6e6;border-radius:1px"></div>
<div class="a" style="left:269px;top:595px;font-size:14px;color:#424242;">D7</div>
<div class="a" style="left:349px;top:595px;font-size:14px;color:#424242;">House PTZ</div>
<div class="a" style="left:533px;top:595px;font-size:14px;color:#424242;">192.168.254.8</div>
<div class="a" style="left:711px;top:595px;font-size:14px;color:#424242;">1</div>
<div class="a" style="left:889px;top:595px;font-size:14px;color:#424242;">8000</div>
<div class="a" style="left:1067px;top:595px;font-size:14px;color:#424242;">N/A</div>
<svg class="a" style="left:1245px;top:595px;" width="14" height="14" viewBox="0 0 14 14"><circle cx="7" cy="7" r="6.6" fill="#16a80f"/><path d="M3.6 7.2 L6 9.4 L10.4 4.8" fill="none" stroke="#fff" stroke-width="1.7"/></svg>
<div class="a" style="left:1263px;top:595px;font-size:14px;color:#424242;">Online</div>
<div class="a" style="left:1423px;top:595px;font-size:14px;color:#424242;">HIKVISION</div>
<div class="a" style="left:1601px;top:595px;font-size:14px;color:#106ed2;">http://192.168.1.106:6&#8230;</div>
<svg class="a" style="left:1788px;top:595px;" width="16" height="16" viewBox="0 0 16 16"><path d="M8 2 H2 V15 H14 V9" fill="none" stroke="#555" stroke-width="1.5"/><path d="M6 11 L6.5 8 L13 1.5 L15 3.5 L8.5 10Z" fill="none" stroke="#555" stroke-width="1.3" stroke-linejoin="round"/></svg>
<div class="a" style="left:217px;top:664px;width:1629px;height:1px;background:#e8e8e8"></div>
<div class="a" style="left:233px;top:636px;width:16px;height:16px;background:#f4f4f4;border:1px solid #e6e6e6;border-radius:1px"></div>
<div class="a" style="left:269px;top:636px;font-size:14px;color:#424242;">D8</div>
<div class="a" style="left:349px;top:636px;font-size:14px;color:#424242;">Side Garage PTZ</div>
<div class="a" style="left:533px;top:636px;font-size:14px;color:#424242;">192.168.254.9</div>
<div class="a" style="left:711px;top:636px;font-size:14px;color:#424242;">1</div>
<div class="a" style="left:889px;top:636px;font-size:14px;color:#424242;">8000</div>
<div class="a" style="left:1067px;top:636px;font-size:14px;color:#424242;">N/A</div>
<svg class="a" style="left:1245px;top:636px;" width="14" height="14" viewBox="0 0 14 14"><circle cx="7" cy="7" r="6.6" fill="#16a80f"/><path d="M3.6 7.2 L6 9.4 L10.4 4.8" fill="none" stroke="#fff" stroke-width="1.7"/></svg>
<div class="a" style="left:1263px;top:636px;font-size:14px;color:#424242;">Online</div>
<div class="a" style="left:1423px;top:636px;font-size:14px;color:#424242;">HIKVISION</div>
<div class="a" style="left:1601px;top:636px;font-size:14px;color:#106ed2;">http://192.168.1.106:6&#8230;</div>
<svg class="a" style="left:1788px;top:636px;" width="16" height="16" viewBox="0 0 16 16"><path d="M8 2 H2 V15 H14 V9" fill="none" stroke="#555" stroke-width="1.5"/><path d="M6 11 L6.5 8 L13 1.5 L15 3.5 L8.5 10Z" fill="none" stroke="#555" stroke-width="1.3" stroke-linejoin="round"/></svg>
<div class="a" style="left:217px;top:705px;width:1629px;height:1px;background:#e8e8e8"></div>
<div class="a" style="left:233px;top:677px;width:16px;height:16px;background:#f4f4f4;border:1px solid #e6e6e6;border-radius:1px"></div>
<div class="a" style="left:269px;top:677px;font-size:14px;color:#424242;">D9</div>
<div class="a" style="left:349px;top:677px;font-size:14px;color:#424242;">IPCamera 09</div>
<div class="a" style="left:533px;top:677px;font-size:14px;color:#424242;">192.168.254.10</div>
<div class="a" style="left:711px;top:677px;font-size:14px;color:#424242;">1</div>
<div class="a" style="left:889px;top:677px;font-size:14px;color:#424242;">8000</div>
<div class="a" style="left:1067px;top:677px;font-size:14px;color:#424242;">N/A</div>
<svg class="a" style="left:1245px;top:677px;" width="14" height="14" viewBox="0 0 14 14"><circle cx="7" cy="7" r="6.6" fill="#444"/><path d="M3.6 7.2 L6 9.4 L10.4 4.8" fill="none" stroke="#fff" stroke-width="1.7"/></svg>
<div class="a" style="left:1263px;top:677px;font-size:14px;color:#424242;">Offline(IP camera d&#8230;</div>
<div class="a" style="left:1423px;top:677px;font-size:14px;color:#424242;">HIKVISION</div>
<div class="a" style="left:1601px;top:677px;font-size:14px;color:#106ed2;">http://192.168.1.106:6&#8230;</div>
<svg class="a" style="left:1788px;top:677px;" width="16" height="16" viewBox="0 0 16 16"><path d="M8 2 H2 V15 H14 V9" fill="none" stroke="#555" stroke-width="1.5"/><path d="M6 11 L6.5 8 L13 1.5 L15 3.5 L8.5 10Z" fill="none" stroke="#555" stroke-width="1.3" stroke-linejoin="round"/></svg>
<div class="a" style="left:217px;top:746px;width:1629px;height:1px;background:#e8e8e8"></div>
<div class="a" style="left:233px;top:718px;width:16px;height:16px;background:#f4f4f4;border:1px solid #e6e6e6;border-radius:1px"></div>
<div class="a" style="left:269px;top:718px;font-size:14px;color:#424242;">D10</div>
<div class="a" style="left:349px;top:718px;font-size:14px;color:#424242;">IPCamera 10</div>
<div class="a" style="left:533px;top:718px;font-size:14px;color:#424242;">192.168.254.11</div>
<div class="a" style="left:711px;top:718px;font-size:14px;color:#424242;">1</div>
<div class="a" style="left:889px;top:718px;font-size:14px;color:#424242;">8000</div>
<div class="a" style="left:1067px;top:718px;font-size:14px;color:#424242;">N/A</div>
<svg class="a" style="left:1245px;top:718px;" width="14" height="14" viewBox="0 0 14 14"><circle cx="7" cy="7" r="6.6" fill="#444"/><path d="M3.6 7.2 L6 9.4 L10.4 4.8" fill="none" stroke="#fff" stroke-width="1.7"/></svg>
<div class="a" style="left:1263px;top:718px;font-size:14px;color:#424242;">Offline(IP camera d&#8230;</div>
<div class="a" style="left:1423px;top:718px;font-size:14px;color:#424242;">HIKVISION</div>
<div class="a" style="left:1601px;top:718px;font-size:14px;color:#106ed2;">http://192.168.1.106:6&#8230;</div>
<svg class="a" style="left:1788px;top:718px;" width="16" height="16" viewBox="0 0 16 16"><path d="M8 2 H2 V15 H14 V9" fill="none" stroke="#555" stroke-width="1.5"/><path d="M6 11 L6.5 8 L13 1.5 L15 3.5 L8.5 10Z" fill="none" stroke="#555" stroke-width="1.3" stroke-linejoin="round"/></svg>
<div class="a" style="left:217px;top:787px;width:1629px;height:1px;background:#e8e8e8"></div>
<div class="a" style="left:233px;top:759px;width:16px;height:16px;background:#f4f4f4;border:1px solid #e6e6e6;border-radius:1px"></div>
<div class="a" style="left:269px;top:759px;font-size:14px;color:#424242;">D11</div>
<div class="a" style="left:349px;top:759px;font-size:14px;color:#424242;">IPCamera 11</div>
<div class="a" style="left:533px;top:759px;font-size:14px;color:#424242;">192.168.254.12</div>
<div class="a" style="left:711px;top:759px;font-size:14px;color:#424242;">1</div>
<div class="a" style="left:889px;top:759px;font-size:14px;color:#424242;">8000</div>
<div class="a" style="left:1067px;top:759px;font-size:14px;color:#424242;">N/A</div>
<svg class="a" style="left:1245px;top:759px;" width="14" height="14" viewBox="0 0 14 14"><circle cx="7" cy="7" r="6.6" fill="#444"/><path d="M3.6 7.2 L6 9.4 L10.4 4.8" fill="none" stroke="#fff" stroke-width="1.7"/></svg>
<div class="a" style="left:1263px;top:759px;font-size:14px;color:#424242;">Offline(IP camera d&#8230;</div>
<div class="a" style="left:1423px;top:759px;font-size:14px;color:#424242;">HIKVISION</div>
<div class="a" style="left:1601px;top:759px;font-size:14px;color:#106ed2;">http://192.168.1.106:6&#8230;</div>
<svg class="a" style="left:1788px;top:759px;" width="16" height="16" viewBox="0 0 16 16"><path d="M8 2 H2 V15 H14 V9" fill="none" stroke="#555" stroke-width="1.5"/><path d="M6 11 L6.5 8 L13 1.5 L15 3.5 L8.5 10Z" fill="none" stroke="#555" stroke-width="1.3" stroke-linejoin="round"/></svg>
<div class="a" style="left:217px;top:828px;width:1629px;height:1px;background:#e8e8e8"></div>
<div class="a" style="left:233px;top:800px;width:16px;height:16px;background:#f4f4f4;border:1px solid #e6e6e6;border-radius:1px"></div>
<div class="a" style="left:269px;top:800px;font-size:14px;color:#424242;">D12</div>
<div class="a" style="left:349px;top:800px;font-size:14px;color:#424242;">IPCamera 12</div>
<div class="a" style="left:533px;top:800px;font-size:14px;color:#424242;">192.168.254.13</div>
<div class="a" style="left:711px;top:800px;font-size:14px;color:#424242;">1</div>
<div class="a" style="left:889px;top:800px;font-size:14px;color:#424242;">8000</div>
<div class="a" style="left:1067px;top:800px;font-size:14px;color:#424242;">N/A</div>
<svg class="a" style="left:1245px;top:800px;" width="14" height="14" viewBox="0 0 14 14"><circle cx="7" cy="7" r="6.6" fill="#444"/><path d="M3.6 7.2 L6 9.4 L10.4 4.8" fill="none" stroke="#fff" stroke-width="1.7"/></svg>
<div class="a" style="left:1263px;top:800px;font-size:14px;color:#424242;">Offline(IP camera d&#8230;</div>
<div class="a" style="left:1423px;top:800px;font-size:14px;color:#424242;">HIKVISION</div>
<div class="a" style="left:1601px;top:800px;font-size:14px;color:#106ed2;">http://192.168.1.106:6&#8230;</div>
<svg class="a" style="left:1788px;top:800px;" width="16" height="16" viewBox="0 0 16 16"><path d="M8 2 H2 V15 H14 V9" fill="none" stroke="#555" stroke-width="1.5"/><path d="M6 11 L6.5 8 L13 1.5 L15 3.5 L8.5 10Z" fill="none" stroke="#555" stroke-width="1.3" stroke-linejoin="round"/></svg>
<div class="a" style="left:217px;top:869px;width:1629px;height:1px;background:#e8e8e8"></div>
<div class="a" style="left:233px;top:841px;width:16px;height:16px;background:#f4f4f4;border:1px solid #e6e6e6;border-radius:1px"></div>
<div class="a" style="left:269px;top:841px;font-size:14px;color:#424242;">D13</div>
<div class="a" style="left:349px;top:841px;font-size:14px;color:#424242;">IPCamera 13</div>
<div class="a" style="left:533px;top:841px;font-size:14px;color:#424242;">192.168.254.14</div>
<div class="a" style="left:711px;top:841px;font-size:14px;color:#424242;">1</div>
<div class="a" style="left:889px;top:841px;font-size:14px;color:#424242;">8000</div>
<div class="a" style="left:1067px;top:841px;font-size:14px;color:#424242;">N/A</div>
<svg class="a" style="left:1245px;top:841px;" width="14" height="14" viewBox="0 0 14 14"><circle cx="7" cy="7" r="6.6" fill="#444"/><path d="M3.6 7.2 L6 9.4 L10.4 4.8" fill="none" stroke="#fff" stroke-width="1.7"/></svg>
<div class="a" style="left:1263px;top:841px;font-size:14px;color:#424242;">Offline(IP camera d&#8230;</div>
<div class="a" style="left:1423px;top:841px;font-size:14px;color:#424242;">HIKVISION</div>
<div class="a" style="left:1601px;top:841px;font-size:14px;color:#106ed2;">http://192.168.1.106:6&#8230;</div>
<svg class="a" style="left:1788px;top:841px;" width="16" height="16" viewBox="0 0 16 16"><path d="M8 2 H2 V15 H14 V9" fill="none" stroke="#555" stroke-width="1.5"/><path d="M6 11 L6.5 8 L13 1.5 L15 3.5 L8.5 10Z" fill="none" stroke="#555" stroke-width="1.3" stroke-linejoin="round"/></svg>
<div class="a" style="left:233px;top:882px;width:16px;height:16px;background:#f4f4f4;border:1px solid #e6e6e6;border-radius:1px"></div>
<div class="a" style="left:269px;top:882px;font-size:14px;color:#424242;">D14</div>
<div class="a" style="left:349px;top:882px;font-size:14px;color:#424242;">IPCamera 14</div>
<div class="a" style="left:533px;top:882px;font-size:14px;color:#424242;">192.168.254.15</div>
<div class="a" style="left:711px;top:882px;font-size:14px;color:#424242;">1</div>
<div class="a" style="left:889px;top:882px;font-size:14px;color:#424242;">8000</div>
<div class="a" style="left:1067px;top:882px;font-size:14px;color:#424242;">N/A</div>
<svg class="a" style="left:1245px;top:882px;" width="14" height="14" viewBox="0 0 14 14"><circle cx="7" cy="7" r="6.6" fill="#444"/><path d="M3.6 7.2 L6 9.4 L10.4 4.8" fill="none" stroke="#fff" stroke-width="1.7"/></svg>
<div class="a" style="left:1263px;top:882px;font-size:14px;color:#424242;">Offline(IP camera d&#8230;</div>
<div class="a" style="left:1423px;top:882px;font-size:14px;color:#424242;">HIKVISION</div>
<div class="a" style="left:1601px;top:882px;font-size:14px;color:#106ed2;">http://192.168.1.106:6&#8230;</div>
<svg class="a" style="left:1788px;top:882px;" width="16" height="16" viewBox="0 0 16 16"><path d="M8 2 H2 V15 H14 V9" fill="none" stroke="#555" stroke-width="1.5"/><path d="M6 11 L6.5 8 L13 1.5 L15 3.5 L8.5 10Z" fill="none" stroke="#555" stroke-width="1.3" stroke-linejoin="round"/></svg>
<div class="a" style="left:1839px;top:339px;width:4px;height:494px;background:#c8c8c8;border-radius:2px"></div>
<div class="a" style="left:216px;top:929px;font-size:14px;color:#333;">Total 16</div>
<div class="a" style="left:275px;top:921px;width:112px;height:32px;background:#fff;border:1px solid #a9a9a9;border-radius:2px"></div>
<div class="a" style="left:284px;top:931px;font-size:14px;color:#444;">20 /page</div>
<svg class="a" style="left:364px;top:934px;" width="12" height="7" viewBox="0 0 12 7"><path d="M1 1 L6 6 L11 1" fill="none" stroke="#555" stroke-width="1.3"/></svg>
<svg class="a" style="left:1555px;top:930px;" width="10" height="15" viewBox="0 0 10 15"><path d="M9 1 L1.5 7.5 L9 14" fill="none" stroke="#c4c4c4" stroke-width="1.2"/></svg>
<div class="a" style="left:1596px;top:929px;font-size:14px;color:#e8161f;">1</div>
<svg class="a" style="left:1634px;top:930px;" width="10" height="15" viewBox="0 0 10 15"><path d="M1 1 L8.5 7.5 L1 14" fill="none" stroke="#c4c4c4" stroke-width="1.2"/></svg>
<div class="a" style="left:1679px;top:921px;width:72px;height:32px;background:#fff;border:1px solid #a9a9a9;border-radius:2px"></div>
<div class="a" style="left:1688px;top:931px;font-size:14px;color:#333;">1</div>
<div class="a" style="left:1759px;top:931px;font-size:14px;color:#333;">/ 1</div>
<div class="a" style="left:1791px;top:922px;width:56px;height:32px;background:#fff;border:1px solid #cfcfcf;border-radius:2px"></div>
<div class="a" style="left:1809px;top:931px;font-size:14px;color:#333;">Go</div>
<div class="a" style="left:857px;top:972px;font-size:12px;color:#505050;">©2022 Hikvision Digital Technology Co., Ltd. All Rights Reserved.</div>
<svg class="a" style="left:1883px;top:83px;" width="18" height="18" viewBox="0 0 18 18"><circle cx="7" cy="7" r="5.5" fill="#e8f2fb" stroke="#333" stroke-width="2"/><path d="M11 11 L16.5 16.5" stroke="#c040e0" stroke-width="2.6" stroke-linecap="round"/></svg>
<svg class="a" style="left:1883px;top:123px;" width="18" height="18" viewBox="0 0 18 18"><path d="M9 1.5 H16.5 V9 L8.5 17 L1 9.5Z" fill="#4a7be8"/><path d="M9 1.5 H16.5 V9 L12 13.5 L5 6Z" fill="#6a5ae0" opacity="0.6"/><circle cx="13" cy="5" r="1.6" fill="#ffd24a"/></svg>
<svg class="a" style="left:1883px;top:164px;" width="18" height="16" viewBox="0 0 18 16"><rect x="1" y="4" width="16" height="11" rx="2" fill="#e2552a"/><rect x="1" y="4" width="16" height="4" fill="#f07a40"/><path d="M6 4 V2 H12 V4" fill="none" stroke="#7a3a20" stroke-width="1.4"/><rect x="8" y="7" width="2" height="3" fill="#f6d0a0"/></svg>
<svg class="a" style="left:1883px;top:203px;" width="19" height="18" viewBox="0 0 19 18"><circle cx="6" cy="6" r="2.8" fill="#555"/><path d="M2.5 17 L4 10 H8 L9.5 17Z" fill="#444"/><path d="M11 1 H13 V3 H15 V1 H17 V6 L16 7 V13 H12 V7 L11 6Z" fill="#b040e0"/></svg>
<svg class="a" style="left:1883px;top:243px;" width="18" height="18" viewBox="0 0 18 18"><path d="M9 1 L16 5 V13 L9 17 L2 13 V5Z" fill="#6a6ae8"/><path d="M9 1 L16 5 V9 L9 5Z" fill="#3aa0f0"/><path d="M2 13 L9 17 L9 13 L2 9Z" fill="#c050d0"/><circle cx="9" cy="9" r="3.2" fill="#f7f7f7"/></svg>
<svg class="a" style="left:1883px;top:283px;" width="19" height="18" viewBox="0 0 19 18"><rect x="6" y="2" width="12" height="14" rx="1.5" fill="#28a8ea"/><rect x="6" y="9" width="12" height="7" fill="#0a64b8"/><rect x="1" y="5" width="10" height="10" rx="1.2" fill="#0f6cbd"/><ellipse cx="6" cy="10" rx="2.6" ry="3" fill="none" stroke="#fff" stroke-width="1.5"/></svg>
<svg class="a" style="left:1883px;top:323px;" width="19" height="18" viewBox="0 0 19 18"><rect x="3" y="1" width="13" height="13" rx="2" fill="#8e5ce8"/><circle cx="11" cy="5" r="1.8" fill="#ffd24a"/><path d="M1 16 C4 11 7 12 10 14" fill="none" stroke="#2aa860" stroke-width="2"/><path d="M9 15 L17 7" stroke="#3a78e0" stroke-width="2.4"/><path d="M7.5 16.5 L9.5 14.5" stroke="#f0b020" stroke-width="2"/></svg>
<svg class="a" style="left:1883px;top:363px;" width="19" height="16" viewBox="0 0 19 16"><path d="M1 7 L18 1 L12 15 L8 10Z" fill="#2a9ff0"/><path d="M1 7 L8 10 L12 15 L9 9Z" fill="#f0a020"/><path d="M8 10 L18 1 L9 9Z" fill="#1a6fd0"/></svg>
<svg class="a" style="left:1885px;top:408px;" width="15" height="15" viewBox="0 0 15 15"><path d="M7.5 0.5V14.5M0.5 7.5H14.5" stroke="#222" stroke-width="1.2"/></svg>
<div class="a" style="left:1879px;top:947px;width:28px;height:1px;background:#c4c4c4"></div>
<svg class="a" style="left:1885px;top:963px;" width="16" height="14" viewBox="0 0 16 14"><rect x="1" y="1" width="14" height="12" rx="2.2" fill="none" stroke="#111" stroke-width="1.1"/><path d="M10.5 1.5 V12.5" stroke="#111" stroke-width="1.1"/></svg>
<svg class="a" style="left:1884px;top:1001px;" width="18" height="18" viewBox="0 0 18 18"><path d="M9.00 0.70 L9.14 0.70 L9.29 0.72 L9.43 0.74 L9.58 0.77 L9.72 0.81 L9.86 0.86 L9.99 0.92 L10.13 0.98 L10.26 1.06 L10.39 1.14 L10.51 1.23 L10.63 1.32 L10.75 1.42 L10.86 1.53 L10.97 1.64 L11.08 1.76 L11.18 1.88 L11.27 2.00 L11.37 2.13 L11.45 2.26 L11.54 2.39 L11.61 2.53 L11.69 2.66 L11.76 2.80 L11.83 2.93 L11.89 3.06 L11.96 3.19 L12.02 3.32 L12.08 3.44 L12.15 3.54 L12.27 3.55 L12.41 3.54 L12.55 3.54 L12.69 3.53 L12.84 3.52 L12.99 3.51 L13.14 3.50 L13.30 3.50 L13.45 3.50 L13.61 3.51 L13.77 3.52 L13.92 3.53 L14.08 3.55 L14.23 3.58 L14.39 3.61 L14.54 3.65 L14.69 3.70 L14.83 3.75 L14.98 3.80 L15.12 3.87 L15.25 3.94 L15.38 4.02 L15.50 4.10 L15.62 4.19 L15.73 4.29 L15.84 4.39 L15.94 4.50 L16.03 4.61 L16.11 4.73 L16.19 4.85 L16.26 4.98 L16.32 5.11 L16.37 5.25 L16.41 5.38 L16.45 5.53 L16.48 5.67 L16.49 5.82 L16.50 5.97 L16.51 6.12 L16.50 6.27 L16.49 6.42 L16.47 6.57 L16.44 6.73 L16.40 6.88 L16.36 7.03 L16.31 7.18 L16.26 7.32 L16.20 7.47 L16.13 7.61 L16.06 7.75 L15.99 7.89 L15.91 8.03 L15.83 8.16 L15.75 8.29 L15.67 8.42 L15.59 8.54 L15.51 8.66 L15.43 8.78 L15.36 8.89 L15.30 9.00 L15.36 9.11 L15.43 9.22 L15.51 9.34 L15.59 9.46 L15.67 9.58 L15.75 9.71 L15.83 9.84 L15.91 9.97 L15.99 10.11 L16.06 10.25 L16.13 10.39 L16.20 10.53 L16.26 10.68 L16.31 10.82 L16.36 10.97 L16.40 11.12 L16.44 11.27 L16.47 11.43 L16.49 11.58 L16.50 11.73 L16.51 11.88 L16.50 12.03 L16.49 12.18 L16.48 12.33 L16.45 12.47 L16.41 12.62 L16.37 12.75 L16.32 12.89 L16.26 13.02 L16.19 13.15 L16.11 13.27 L16.03 13.39 L15.94 13.50 L15.84 13.61 L15.73 13.71 L15.62 13.81 L15.50 13.90 L15.38 13.98 L15.25 14.06 L15.12 14.13 L14.98 14.20 L14.83 14.25 L14.69 14.30 L14.54 14.35 L14.39 14.39 L14.23 14.42 L14.08 14.45 L13.92 14.47 L13.77 14.48 L13.61 14.49 L13.45 14.50 L13.30 14.50 L13.14 14.50 L12.99 14.49 L12.84 14.48 L12.69 14.47 L12.55 14.46 L12.41 14.46 L12.27 14.45 L12.15 14.46 L12.08 14.56 L12.02 14.68 L11.96 14.81 L11.89 14.94 L11.83 15.07 L11.76 15.20 L11.69 15.34 L11.61 15.47 L11.54 15.61 L11.45 15.74 L11.37 15.87 L11.27 16.00 L11.18 16.12 L11.08 16.24 L10.97 16.36 L10.86 16.47 L10.75 16.58 L10.63 16.68 L10.51 16.77 L10.39 16.86 L10.26 16.94 L10.13 17.02 L9.99 17.08 L9.86 17.14 L9.72 17.19 L9.58 17.23 L9.43 17.26 L9.29 17.28 L9.14 17.30 L9.00 17.30 L8.86 17.30 L8.71 17.28 L8.57 17.26 L8.42 17.23 L8.28 17.19 L8.14 17.14 L8.01 17.08 L7.87 17.02 L7.74 16.94 L7.61 16.86 L7.49 16.77 L7.37 16.68 L7.25 16.58 L7.14 16.47 L7.03 16.36 L6.92 16.24 L6.82 16.12 L6.73 16.00 L6.63 15.87 L6.55 15.74 L6.46 15.61 L6.39 15.47 L6.31 15.34 L6.24 15.20 L6.17 15.07 L6.11 14.94 L6.04 14.81 L5.98 14.68 L5.92 14.56 L5.85 14.46 L5.73 14.45 L5.59 14.46 L5.45 14.46 L5.31 14.47 L5.16 14.48 L5.01 14.49 L4.86 14.50 L4.70 14.50 L4.55 14.50 L4.39 14.49 L4.23 14.48 L4.08 14.47 L3.92 14.45 L3.77 14.42 L3.61 14.39 L3.46 14.35 L3.31 14.30 L3.17 14.25 L3.02 14.20 L2.88 14.13 L2.75 14.06 L2.62 13.98 L2.50 13.90 L2.38 13.81 L2.27 13.71 L2.16 13.61 L2.06 13.50 L1.97 13.39 L1.89 13.27 L1.81 13.15 L1.74 13.02 L1.68 12.89 L1.63 12.75 L1.59 12.62 L1.55 12.47 L1.52 12.33 L1.51 12.18 L1.50 12.03 L1.49 11.88 L1.50 11.73 L1.51 11.58 L1.53 11.43 L1.56 11.27 L1.60 11.12 L1.64 10.97 L1.69 10.82 L1.74 10.68 L1.80 10.53 L1.87 10.39 L1.94 10.25 L2.01 10.11 L2.09 9.97 L2.17 9.84 L2.25 9.71 L2.33 9.58 L2.41 9.46 L2.49 9.34 L2.57 9.22 L2.64 9.11 L2.70 9.00 L2.64 8.89 L2.57 8.78 L2.49 8.66 L2.41 8.54 L2.33 8.42 L2.25 8.29 L2.17 8.16 L2.09 8.03 L2.01 7.89 L1.94 7.75 L1.87 7.61 L1.80 7.47 L1.74 7.32 L1.69 7.18 L1.64 7.03 L1.60 6.88 L1.56 6.73 L1.53 6.57 L1.51 6.42 L1.50 6.27 L1.49 6.12 L1.50 5.97 L1.51 5.82 L1.52 5.67 L1.55 5.53 L1.59 5.38 L1.63 5.25 L1.68 5.11 L1.74 4.98 L1.81 4.85 L1.89 4.73 L1.97 4.61 L2.06 4.50 L2.16 4.39 L2.27 4.29 L2.38 4.19 L2.50 4.10 L2.62 4.02 L2.75 3.94 L2.88 3.87 L3.02 3.80 L3.17 3.75 L3.31 3.70 L3.46 3.65 L3.61 3.61 L3.77 3.58 L3.92 3.55 L4.08 3.53 L4.23 3.52 L4.39 3.51 L4.55 3.50 L4.70 3.50 L4.86 3.50 L5.01 3.51 L5.16 3.52 L5.31 3.53 L5.45 3.54 L5.59 3.54 L5.73 3.55 L5.85 3.54 L5.92 3.44 L5.98 3.32 L6.04 3.19 L6.11 3.06 L6.17 2.93 L6.24 2.80 L6.31 2.66 L6.39 2.53 L6.46 2.39 L6.55 2.26 L6.63 2.13 L6.73 2.00 L6.82 1.88 L6.92 1.76 L7.03 1.64 L7.14 1.53 L7.25 1.42 L7.37 1.32 L7.49 1.23 L7.61 1.14 L7.74 1.06 L7.87 0.98 L8.01 0.92 L8.14 0.86 L8.28 0.81 L8.42 0.77 L8.57 0.74 L8.71 0.72 L8.86 0.70 L9.00 0.70Z" fill="none" stroke="#111" stroke-width="1.1" stroke-linejoin="round"/><circle cx="9" cy="9" r="2" fill="none" stroke="#111" stroke-width="1.1"/></svg>
<svg class="a" style="left:21px;top:1045px;" width="23" height="23" viewBox="0 0 23 23"><defs><linearGradient id="wg" x1="0" y1="0" x2="1" y2="1"><stop offset="0" stop-color="#5fd0fb"/><stop offset="1" stop-color="#0a6fd6"/></linearGradient></defs><rect x="0" y="0" width="11" height="11" rx="1" fill="url(#wg)"/><rect x="12" y="0" width="11" height="11" rx="1" fill="url(#wg)"/><rect x="0" y="12" width="11" height="11" rx="1" fill="url(#wg)"/><rect x="12" y="12" width="11" height="11" rx="1" fill="url(#wg)"/></svg>
<div class="a" style="left:57px;top:1040px;width:219px;height:32px;background:#faf6ef;border:1px solid #ddd3c4;border-radius:16px"></div>
<div class="a" style="left:219px;top:1042px;width:55px;height:28px;background:#ebe6df;border-radius:14px"></div>
<svg class="a" style="left:68px;top:1048px;" width="16" height="16" viewBox="0 0 16 16"><circle cx="6.5" cy="6.5" r="5.3" fill="none" stroke="#1a1a1a" stroke-width="1.6"/><path d="M10.5 10.5 L14.5 14.5" stroke="#1a1a1a" stroke-width="1.8" stroke-linecap="round"/></svg>
<div class="a" style="left:94px;top:1048px;font-size:13px;color:#5f5f5f;transform:scaleX(0.99);transform-origin:0 0;">Search</div>
<svg class="a" style="left:235px;top:1046px;" width="25" height="21" viewBox="0 0 25 21"><path d="M9 4 V2 H16 V4" fill="none" stroke="#333" stroke-width="1.6"/><rect x="0.5" y="4" width="24" height="16" rx="2.5" fill="#e8900c"/><rect x="0.5" y="11" width="24" height="9" rx="2" fill="#b86508"/><rect x="11" y="9" width="3.5" height="3" fill="#ffe060"/></svg>
<svg class="a" style="left:289px;top:1045px;" width="25" height="23" viewBox="0 0 25 23"><rect x="6" y="0" width="18" height="16" rx="1.5" fill="#f4f4f4"/><rect x="0" y="6" width="18" height="16" rx="1.5" fill="#222"/><rect x="6" y="6" width="12" height="10" fill="#a0a0a0"/></svg>
<svg class="a" style="left:332px;top:1047px;" width="26" height="18" viewBox="0 0 26 18"><path d="M6 16 A5 5 0 0 1 5 6.5 A7 7 0 0 1 18 7 A4.5 4.5 0 0 1 21 16Z" fill="#a8c8f0"/></svg>
<div class="a" style="left:342px;top:1039px;width:23px;height:16px;background:#f8f3ec;border-radius:8px"></div>
<div class="a" style="left:345px;top:1041px;font-size:11px;color:#111;">16°</div>
<svg class="a" style="left:377px;top:1044px;" width="24" height="24" viewBox="0 0 24 24"><circle cx="12" cy="12.5" r="11" fill="#6a5cd8"/><path d="M2 23 L4 17 L9 21Z" fill="#6a5cd8"/><rect x="6" y="9" width="9" height="8" rx="1.5" fill="#fff"/><path d="M15 11 L19 9 V17 L15 15Z" fill="#fff"/></svg>
<svg class="a" style="left:390px;top:1039px;" width="16" height="16" viewBox="0 0 16 16"><circle cx="8" cy="8" r="7.8" fill="#0f6cbd"/><text x="8" y="12" font-size="10" font-family="Liberation Sans" fill="#fff" text-anchor="middle">1</text></svg>
<svg class="a" style="left:421px;top:1045px;" width="26" height="22" viewBox="0 0 26 22"><rect x="6" y="3" width="18" height="18" rx="1" fill="#0a64b8"/><rect x="6" y="12" width="18" height="9" fill="#28a8ea"/><rect x="0" y="7" width="13" height="12" rx="1" fill="#0f6cbd"/><ellipse cx="6.5" cy="13" rx="3" ry="3.6" fill="none" stroke="#fff" stroke-width="1.8"/></svg>
<svg class="a" style="left:434px;top:1039px;" width="16" height="16" viewBox="0 0 16 16"><circle cx="8" cy="8" r="7.8" fill="#0a58a8"/><rect x="3.5" y="5" width="9" height="6.5" rx="1" fill="none" stroke="#fff" stroke-width="1.1"/><path d="M3.8 5.5 L8 8.8 L12.2 5.5" fill="none" stroke="#fff" stroke-width="1.1"/></svg>
<div class="a" style="left:430px;top:1072px;width:6px;height:3px;background:#7a7570;border-radius:2px"></div>
<div class="a" style="left:458px;top:1037px;width:38px;height:38px;background:#f6f1ea;border:1px solid #e6ddd0;border-radius:5px"></div>
<svg class="a" style="left:464px;top:1044px;" width="25" height="25" viewBox="0 0 25 25"><defs><linearGradient id="eg1" x1="0" y1="0" x2="1" y2="0.6"><stop offset="0" stop-color="#38bdf6"/><stop offset="0.5" stop-color="#2cc3c8"/><stop offset="1" stop-color="#52d44a"/></linearGradient></defs><path d="M0.8 13 C0.8 5 6.5 0 13 0 C20 0 24.5 5 24.5 11 C24.5 15.5 21 16.8 17.5 16.8 C14.5 16.8 13 14.5 13.8 12.5 C12.5 9 9 8 6 9 C3 10 0.8 12 0.8 13 Z" fill="url(#eg1)"/><path d="M0.8 13.5 C1.5 9.5 5 7.8 9 8.2 C12 8.6 13.5 10.5 13.6 12.4 C12 13.5 11.2 15.5 11.2 17.5 C11.2 21.5 14 24 17 24.6 C9 26 0.8 21 0.8 13.5Z" fill="#1a7ad8"/><path d="M13 19 C15.5 20.5 19 20.8 22.5 18.8 C21 22.5 17.5 24.8 13.5 24.8 C11.5 24.8 11 22 13 19Z" fill="#0e50a6"/><circle cx="6" cy="19" r="5.8" fill="#dcdcdc"/><circle cx="6" cy="17.2" r="2.2" fill="#8c8c8c"/><ellipse cx="6" cy="22.3" rx="3.6" ry="1.7" fill="#8c8c8c"/></svg>
<div class="a" style="left:469px;top:1072px;width:15px;height:3px;background:#0f6cbd;border-radius:2px"></div>
<svg class="a" style="left:509px;top:1045px;" width="24" height="21" viewBox="0 0 24 21"><path d="M0 2 A1.5 1.5 0 0 1 1.5 0.5 H8 L10 2.5 H22.5 A1.5 1.5 0 0 1 24 4 V20 H0Z" fill="#e8a90e"/><rect x="0" y="5" width="24" height="15.5" rx="1" fill="#fbd34a"/><rect x="5" y="14" width="14" height="6.5" rx="1" fill="#1d7bd8"/></svg>
<div class="a" style="left:517px;top:1072px;width:6px;height:3px;background:#7a7570;border-radius:2px"></div>
<svg class="a" style="left:552px;top:1044px;" width="25" height="25" viewBox="0 0 25 25"><circle cx="11" cy="11" r="10" fill="#5aa8e8" stroke="#8ac0f0" stroke-width="1.5"/><rect x="4" y="10" width="14" height="3" fill="#a8d4f8"/><path d="M18 18 L23 23" stroke="#7ab0e0" stroke-width="2.5"/></svg>
<div class="a" style="left:562px;top:1072px;width:6px;height:3px;background:#7a7570;border-radius:2px"></div>
<svg class="a" style="left:597px;top:1045px;" width="25" height="22" viewBox="0 0 25 22"><rect x="6" y="0.5" width="18" height="21" rx="1" fill="#2b7cd3"/><rect x="6" y="8" width="18" height="7" fill="#185abd"/><rect x="6" y="15" width="18" height="6.5" fill="#103f91"/><rect x="0" y="5" width="13" height="12" rx="1" fill="#185abd"/><text x="6.5" y="14.5" font-size="9.5" font-weight="bold" font-family="Liberation Sans" fill="#fff" text-anchor="middle">W</text></svg>
<div class="a" style="left:606px;top:1072px;width:6px;height:3px;background:#7a7570;border-radius:2px"></div>
<svg class="a" style="left:641px;top:1044px;" width="25" height="25" viewBox="0 0 25 25"><circle cx="12.5" cy="12.5" r="12" fill="#db4437"/><path d="M12.5 12.5 L2.1 6.5 A12 12 0 0 0 12.5 24.5Z" fill="#0f9d58"/><path d="M12.5 12.5 L12.5 24.5 A12 12 0 0 0 22.9 6.5Z" fill="#ffcd40"/><path d="M12.5 12.5 L22.9 6.5 A12 12 0 0 0 2.1 6.5Z" fill="#db4437"/><circle cx="12.5" cy="12.5" r="5.5" fill="#fff"/><circle cx="12.5" cy="12.5" r="4.3" fill="#4285f4"/></svg>
<div class="a" style="left:650px;top:1072px;width:6px;height:3px;background:#7a7570;border-radius:2px"></div>
<svg class="a" style="left:685px;top:1044px;" width="25" height="25" viewBox="0 0 25 25"><circle cx="12.5" cy="12.5" r="12" fill="#6d9af0"/><circle cx="12.5" cy="9.5" r="4.2" fill="none" stroke="#fff" stroke-width="2"/><path d="M16.6 10 Q16 17 11 19.5" fill="none" stroke="#fff" stroke-width="2"/></svg>
<div class="a" style="left:694px;top:1072px;width:6px;height:3px;background:#7a7570;border-radius:2px"></div>
<svg class="a" style="left:729px;top:1045px;" width="24" height="23" viewBox="0 0 24 23"><path d="M11 1 C18 1 23 5 22 11 C21 15 17 13 15 15 C13 17 16 21 11 22 C5 22 1 17 1 11 C1 5 5 1 11 1Z" fill="#2aa0e8"/><circle cx="6" cy="11" r="2" fill="#e04a20"/><circle cx="9" cy="6" r="1.8" fill="#2a9a40"/><circle cx="14" cy="4.5" r="1.8" fill="#f0c020"/><rect x="16.5" y="7" width="3" height="15" fill="#a86a30"/><rect x="16" y="6" width="4" height="3" fill="#e0c090"/></svg>
<div class="a" style="left:738px;top:1072px;width:6px;height:3px;background:#7a7570;border-radius:2px"></div>
<svg class="a" style="left:1604px;top:1052px;" width="12" height="8" viewBox="0 0 12 8"><path d="M1 7 L6 2 L11 7" fill="none" stroke="#222" stroke-width="1.3"/></svg>
<svg class="a" style="left:1633px;top:1050px;" width="18" height="11" viewBox="0 0 18 11"><path d="M4 10.5 A3.5 3.5 0 0 1 3.5 3.8 A5 5 0 0 1 13 3.5 A3.5 3.5 0 0 1 14.5 10.5Z" fill="#c8c8c8" stroke="#333" stroke-width="1.2"/></svg>
<svg class="a" style="left:1665px;top:1051px;" width="18" height="11" viewBox="0 0 18 11"><path d="M4 10.5 A3.5 3.5 0 0 1 3.5 3.8 A5 5 0 0 1 13 3.5 A3.5 3.5 0 0 1 16.5 10.5Z" fill="#1f86e0"/></svg>
<svg class="a" style="left:1698px;top:1047px;" width="15" height="18" viewBox="0 0 15 18"><path d="M7.5 1 C10 2.5 12 3 14 3 V9 C14 13 11 16 7.5 17 C4 16 1 13 1 9 V3 C3 3 5 2.5 7.5 1Z" fill="#1a6fd0"/><path d="M7.5 3 C9.5 4 11 4.5 12.5 4.5 V9 C12.5 12 10.5 14.5 7.5 15.2Z" fill="#5aa8f0"/><path d="M4.5 9 L7 11.5 L11 6.5" fill="none" stroke="#fff" stroke-width="1.5"/></svg>
<svg class="a" style="left:1730px;top:1050px;" width="16" height="12" viewBox="0 0 16 12"><path d="M1 5 A10 10 0 0 1 15 5" fill="none" stroke="#bbb" stroke-width="1.2"/><path d="M3.5 7.5 A6.5 6.5 0 0 1 12.5 7.5" fill="none" stroke="#222" stroke-width="1.3"/><path d="M5.8 9.6 A3 3 0 0 1 10.2 9.6" fill="none" stroke="#222" stroke-width="1.3"/><circle cx="8" cy="11" r="1.2" fill="#222"/></svg>
<svg class="a" style="left:1753px;top:1050px;" width="18" height="12" viewBox="0 0 18 12"><path d="M1 4 H4 L8 1 V11 L4 8 H1Z" fill="none" stroke="#222" stroke-width="1.2" stroke-linejoin="round"/><path d="M10.5 3.5 A3.5 3.5 0 0 1 10.5 8.5 M12.5 2 A6 6 0 0 1 12.5 10 M14.5 0.8 A8 8 0 0 1 14.5 11.2" fill="none" stroke="#222" stroke-width="1.1"/></svg>
<svg class="a" style="left:1778px;top:1051px;" width="17" height="10" viewBox="0 0 17 10"><rect x="0.7" y="0.7" width="13.5" height="8.6" rx="2" fill="none" stroke="#222" stroke-width="1.3"/><rect x="3" y="3" width="3" height="4" fill="#222"/><rect x="15" y="3" width="1.6" height="4" fill="#222"/></svg>
<div class="a" style="left:1844px;top:1042px;font-size:12px;color:#111;">16:58</div>
<div class="a" style="left:1811px;top:1058px;font-size:12px;color:#111;">05/06/2023</div>
<svg class="a" style="left:1883px;top:1046px;" width="19" height="19" viewBox="0 0 19 19"><circle cx="9.5" cy="9.5" r="9.5" fill="#0f5fb8"/><text x="9.5" y="13.5" font-size="10.5" font-family="Liberation Sans" fill="#fff" text-anchor="middle">32</text></svg>
</body></html>
